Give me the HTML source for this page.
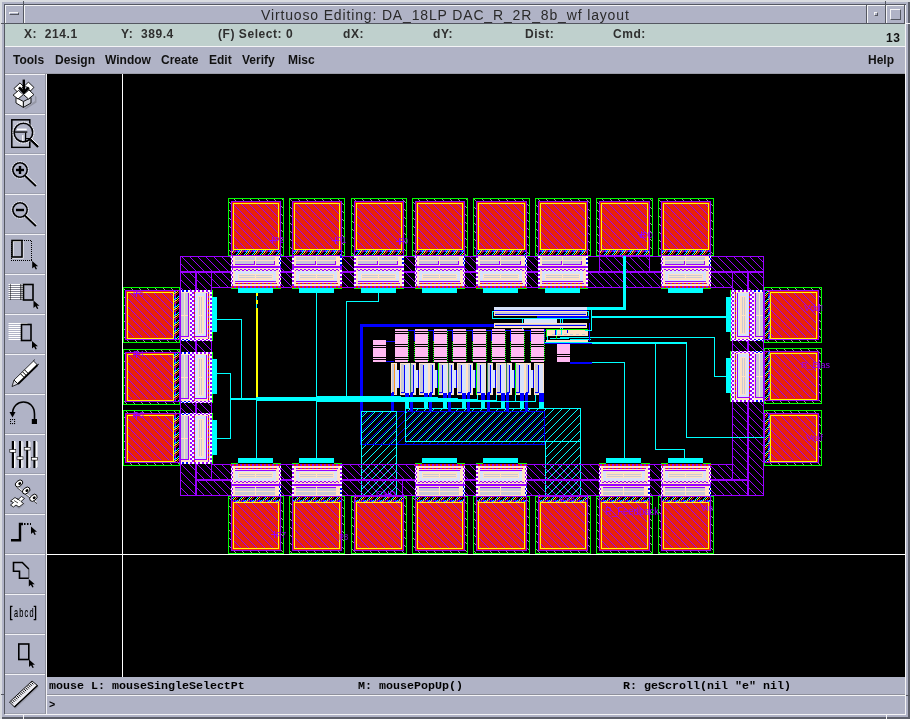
<!DOCTYPE html>
<html><head><meta charset="utf-8">
<style>
html,body{margin:0;padding:0;width:910px;height:719px;overflow:hidden;background:#d9dbe0;}
body{position:relative;font-family:"Liberation Sans",sans-serif;}
.a{position:absolute;}
.t{position:absolute;white-space:pre;line-height:1;will-change:transform;}
</style></head><body>
<!-- outer frame -->
<div class="a" style="left:2px;top:2px;width:908px;height:717px;background:#b0b3c6;"></div>
<div class="a" style="left:908px;top:2px;width:2px;height:717px;background:#5d606b;"></div>
<div class="a" style="left:2px;top:717px;width:908px;height:2px;background:#5d606b;"></div>
<div class="a" style="left:4px;top:4px;width:902px;height:1px;background:#545761;"></div>
<div class="a" style="left:4px;top:4px;width:1px;height:710px;background:#545761;"></div>
<div class="a" style="left:5px;top:714px;width:901px;height:1px;background:#f4f4f6;"></div>
<div class="a" style="left:905px;top:5px;width:1px;height:710px;background:#f4f4f6;"></div>

<div class="a" style="left:1px;top:23px;width:4px;height:1px;background:#545761;"></div>
<div class="a" style="left:906px;top:23px;width:4px;height:1px;background:#f4f4f6;"></div>
<div class="a" style="left:1px;top:694px;width:4px;height:1px;background:#545761;"></div>
<div class="a" style="left:906px;top:695px;width:4px;height:1px;background:#545761;"></div>
<div class="a" style="left:23px;top:714px;width:1px;height:5px;background:#f4f4f6;"></div>
<div class="a" style="left:886px;top:714px;width:1px;height:5px;background:#f4f4f6;"></div>
<!-- title bar -->
<div class="a" style="left:5px;top:5px;width:900px;height:18px;background:#b0b3c6;"></div>
<div class="a" style="left:5px;top:5px;width:900px;height:1px;background:#f4f4f6;"></div>
<div class="a" style="left:5px;top:23px;width:900px;height:1px;background:#545761;"></div>
<div class="a" style="left:5px;top:5px;width:1px;height:18px;background:#f4f4f6;"></div>
<div class="a" style="left:23px;top:1px;width:1px;height:23px;background:#545761;"></div>
<div class="a" style="left:24px;top:5px;width:1px;height:18px;background:#f4f4f6;"></div>
<div class="a" style="left:866px;top:5px;width:1px;height:18px;background:#545761;"></div>
<div class="a" style="left:867px;top:5px;width:1px;height:18px;background:#f4f4f6;"></div>
<div class="a" style="left:885px;top:1px;width:1px;height:23px;background:#545761;"></div>
<div class="a" style="left:886px;top:5px;width:1px;height:18px;background:#f4f4f6;"></div>
<div class="a" style="left:904px;top:5px;width:1px;height:18px;background:#545761;"></div>
<!-- minimize icon (left) -->
<div class="a" style="left:9px;top:12px;width:10px;height:3px;border-top:1px solid #f4f4f6;border-left:1px solid #f4f4f6;border-bottom:1px solid #545761;border-right:1px solid #545761;box-sizing:border-box;"></div>
<!-- iconify -->
<div class="a" style="left:874px;top:12px;width:4px;height:4px;border-top:1px solid #f4f4f6;border-left:1px solid #f4f4f6;border-bottom:1px solid #545761;border-right:1px solid #545761;box-sizing:border-box;"></div>
<!-- maximize -->
<div class="a" style="left:890px;top:9px;width:11px;height:11px;border-top:1px solid #f4f4f6;border-left:1px solid #f4f4f6;border-bottom:1px solid #545761;border-right:1px solid #545761;box-sizing:border-box;"></div>
<div class="t" id="title" style="left:261px;top:8px;font-size:14px;color:#2a2a2a;letter-spacing:0.85px;">Virtuoso Editing: DA_18LP DAC_R_2R_8b_wf layout</div>

<!-- status bar -->
<div class="a" style="left:5px;top:24px;width:900px;height:22px;background:#bfd0cd;"></div>
<div class="a" style="left:5px;top:46px;width:900px;height:1px;background:#f4f4f6;"></div>
<div class="t sb" style="left:24.2px;top:28px;">X:  214.1</div>
<div class="t sb" style="left:120.5px;top:28px;">Y:  389.4</div>
<div class="t sb" style="left:217.6px;top:28px;">(F) Select: 0</div>
<div class="t sb" style="left:343px;top:28px;">dX:</div>
<div class="t sb" style="left:433px;top:28px;">dY:</div>
<div class="t sb" style="left:525px;top:28px;">Dist:</div>
<div class="t sb" style="left:613px;top:28px;">Cmd:</div>
<div class="t sb" style="left:886px;top:32px;color:#111;">13</div>
<style>.sb{font-size:12px;font-weight:bold;color:#2f2f2f;letter-spacing:0.55px;}.mn{font-size:12px;font-weight:bold;color:#111;top:54px;}</style>

<!-- menu bar -->
<div class="t mn" style="left:13px;">Tools</div>
<div class="t mn" style="left:55px;">Design</div>
<div class="t mn" style="left:105px;">Window</div>
<div class="t mn" style="left:161px;">Create</div>
<div class="t mn" style="left:209px;">Edit</div>
<div class="t mn" style="left:242px;">Verify</div>
<div class="t mn" style="left:288px;">Misc</div>
<div class="t mn" style="left:868px;">Help</div>

<!-- canvas -->
<div class="a" style="left:5px;top:73px;width:900px;height:1px;background:#9c9eab;"></div>
<div class="a" id="canvas" style="left:47px;top:74px;width:858px;height:603px;background:#000;"></div>

<svg class="a" style="left:0;top:0;" width="910" height="719" viewBox="0 0 910 719" shape-rendering="crispEdges">
<clipPath id="cclip"><rect x="47" y="74" width="858" height="603"/></clipPath>
<g clip-path="url(#cclip)">
<defs><pattern id="hp" patternUnits="userSpaceOnUse" x="0" y="0" width="8" height="8"><rect x="0" y="3" width="1" height="1" fill="#9a00ff"/><rect x="1" y="4" width="1" height="1" fill="#9a00ff"/><rect x="2" y="5" width="1" height="1" fill="#9a00ff"/><rect x="3" y="6" width="1" height="1" fill="#9a00ff"/><rect x="4" y="7" width="1" height="1" fill="#9a00ff"/><rect x="5" y="0" width="1" height="1" fill="#9a00ff"/><rect x="6" y="1" width="1" height="1" fill="#9a00ff"/><rect x="7" y="2" width="1" height="1" fill="#9a00ff"/></pattern><pattern id="hred" patternUnits="userSpaceOnUse" x="0" y="0" width="8" height="8"><rect width="8" height="8" fill="#e8200c"/><rect x="0" y="3" width="1" height="1" fill="#9a00ff"/><rect x="1" y="4" width="1" height="1" fill="#9a00ff"/><rect x="2" y="5" width="1" height="1" fill="#9a00ff"/><rect x="3" y="6" width="1" height="1" fill="#9a00ff"/><rect x="4" y="7" width="1" height="1" fill="#9a00ff"/><rect x="5" y="0" width="1" height="1" fill="#9a00ff"/><rect x="6" y="1" width="1" height="1" fill="#9a00ff"/><rect x="7" y="2" width="1" height="1" fill="#9a00ff"/></pattern><pattern id="hc" patternUnits="userSpaceOnUse" x="0" y="0" width="8" height="8"><rect x="0" y="2" width="1" height="1" fill="#00ffff"/><rect x="1" y="1" width="1" height="1" fill="#00ffff"/><rect x="2" y="0" width="1" height="1" fill="#00ffff"/><rect x="3" y="7" width="1" height="1" fill="#00ffff"/><rect x="4" y="6" width="1" height="1" fill="#00ffff"/><rect x="5" y="5" width="1" height="1" fill="#00ffff"/><rect x="6" y="4" width="1" height="1" fill="#00ffff"/><rect x="7" y="3" width="1" height="1" fill="#00ffff"/></pattern><pattern id="hb" patternUnits="userSpaceOnUse" x="0" y="0" width="8" height="8"><rect x="0" y="0" width="1" height="1" fill="#0000ff"/><rect x="1" y="7" width="1" height="1" fill="#0000ff"/><rect x="2" y="6" width="1" height="1" fill="#0000ff"/><rect x="3" y="5" width="1" height="1" fill="#0000ff"/><rect x="4" y="4" width="1" height="1" fill="#0000ff"/><rect x="5" y="3" width="1" height="1" fill="#0000ff"/><rect x="6" y="2" width="1" height="1" fill="#0000ff"/><rect x="7" y="1" width="1" height="1" fill="#0000ff"/></pattern><pattern id="hg" patternUnits="userSpaceOnUse" x="0" y="0" width="8" height="8"><rect x="0" y="5" width="1" height="1" fill="#9a9a9a"/><rect x="1" y="6" width="1" height="1" fill="#9a9a9a"/><rect x="2" y="7" width="1" height="1" fill="#9a9a9a"/><rect x="3" y="0" width="1" height="1" fill="#9a9a9a"/><rect x="4" y="1" width="1" height="1" fill="#9a9a9a"/><rect x="5" y="2" width="1" height="1" fill="#9a9a9a"/><rect x="6" y="3" width="1" height="1" fill="#9a9a9a"/><rect x="7" y="4" width="1" height="1" fill="#9a9a9a"/></pattern><pattern id="mix" patternUnits="userSpaceOnUse" x="0" y="0" width="8" height="8"><rect width="8" height="8" fill="#000"/><rect x="0" y="2" width="1" height="1" fill="#00ffff"/><rect x="0" y="4" width="1" height="1" fill="#ffff00"/><rect x="0" y="6" width="1" height="1" fill="#e8200c"/><rect x="1" y="1" width="1" height="1" fill="#00ffff"/><rect x="1" y="3" width="1" height="1" fill="#ffff00"/><rect x="1" y="5" width="1" height="1" fill="#e8200c"/><rect x="2" y="0" width="1" height="1" fill="#00ffff"/><rect x="2" y="2" width="1" height="1" fill="#ffff00"/><rect x="2" y="4" width="1" height="1" fill="#e8200c"/><rect x="3" y="1" width="1" height="1" fill="#ffff00"/><rect x="3" y="3" width="1" height="1" fill="#e8200c"/><rect x="3" y="7" width="1" height="1" fill="#00ffff"/><rect x="4" y="0" width="1" height="1" fill="#ffff00"/><rect x="4" y="2" width="1" height="1" fill="#e8200c"/><rect x="4" y="6" width="1" height="1" fill="#00ffff"/><rect x="5" y="1" width="1" height="1" fill="#e8200c"/><rect x="5" y="5" width="1" height="1" fill="#00ffff"/><rect x="5" y="7" width="1" height="1" fill="#ffff00"/><rect x="6" y="0" width="1" height="1" fill="#e8200c"/><rect x="6" y="4" width="1" height="1" fill="#00ffff"/><rect x="6" y="6" width="1" height="1" fill="#ffff00"/><rect x="7" y="3" width="1" height="1" fill="#00ffff"/><rect x="7" y="5" width="1" height="1" fill="#ffff00"/><rect x="7" y="7" width="1" height="1" fill="#e8200c"/></pattern><pattern id="drow" patternUnits="userSpaceOnUse" x="0" y="0" width="8" height="8"><rect x="0" y="0" width="1" height="1" fill="#0000ff"/><rect x="0" y="1" width="1" height="1" fill="#00ffff"/><rect x="0" y="2" width="1" height="1" fill="#0000ff"/><rect x="0" y="3" width="1" height="1" fill="#ffff00"/><rect x="0" y="4" width="1" height="1" fill="#0000ff"/><rect x="0" y="5" width="1" height="1" fill="#e8200c"/><rect x="0" y="6" width="1" height="1" fill="#0000ff"/><rect x="0" y="7" width="1" height="1" fill="#0000ff"/><rect x="1" y="0" width="1" height="1" fill="#00ffff"/><rect x="1" y="1" width="1" height="1" fill="#9a00ff"/><rect x="1" y="2" width="1" height="1" fill="#ffff00"/><rect x="1" y="3" width="1" height="1" fill="#9a00ff"/><rect x="1" y="4" width="1" height="1" fill="#e8200c"/><rect x="1" y="5" width="1" height="1" fill="#9a00ff"/><rect x="1" y="6" width="1" height="1" fill="#9a00ff"/><rect x="1" y="7" width="1" height="1" fill="#9a00ff"/><rect x="2" y="0" width="1" height="1" fill="#0000ff"/><rect x="2" y="1" width="1" height="1" fill="#ffff00"/><rect x="2" y="2" width="1" height="1" fill="#0000ff"/><rect x="2" y="3" width="1" height="1" fill="#e8200c"/><rect x="2" y="4" width="1" height="1" fill="#0000ff"/><rect x="2" y="5" width="1" height="1" fill="#0000ff"/><rect x="2" y="6" width="1" height="1" fill="#0000ff"/><rect x="2" y="7" width="1" height="1" fill="#00ffff"/><rect x="3" y="0" width="1" height="1" fill="#ffff00"/><rect x="3" y="1" width="1" height="1" fill="#9a00ff"/><rect x="3" y="2" width="1" height="1" fill="#e8200c"/><rect x="3" y="3" width="1" height="1" fill="#9a00ff"/><rect x="3" y="4" width="1" height="1" fill="#9a00ff"/><rect x="3" y="5" width="1" height="1" fill="#9a00ff"/><rect x="3" y="6" width="1" height="1" fill="#00ffff"/><rect x="3" y="7" width="1" height="1" fill="#9a00ff"/><rect x="4" y="0" width="1" height="1" fill="#0000ff"/><rect x="4" y="1" width="1" height="1" fill="#e8200c"/><rect x="4" y="2" width="1" height="1" fill="#0000ff"/><rect x="4" y="3" width="1" height="1" fill="#0000ff"/><rect x="4" y="4" width="1" height="1" fill="#0000ff"/><rect x="4" y="5" width="1" height="1" fill="#00ffff"/><rect x="4" y="6" width="1" height="1" fill="#0000ff"/><rect x="4" y="7" width="1" height="1" fill="#ffff00"/><rect x="5" y="0" width="1" height="1" fill="#e8200c"/><rect x="5" y="1" width="1" height="1" fill="#9a00ff"/><rect x="5" y="2" width="1" height="1" fill="#9a00ff"/><rect x="5" y="3" width="1" height="1" fill="#9a00ff"/><rect x="5" y="4" width="1" height="1" fill="#00ffff"/><rect x="5" y="5" width="1" height="1" fill="#9a00ff"/><rect x="5" y="6" width="1" height="1" fill="#ffff00"/><rect x="5" y="7" width="1" height="1" fill="#9a00ff"/><rect x="6" y="0" width="1" height="1" fill="#0000ff"/><rect x="6" y="1" width="1" height="1" fill="#0000ff"/><rect x="6" y="2" width="1" height="1" fill="#0000ff"/><rect x="6" y="3" width="1" height="1" fill="#00ffff"/><rect x="6" y="4" width="1" height="1" fill="#0000ff"/><rect x="6" y="5" width="1" height="1" fill="#ffff00"/><rect x="6" y="6" width="1" height="1" fill="#0000ff"/><rect x="6" y="7" width="1" height="1" fill="#e8200c"/><rect x="7" y="0" width="1" height="1" fill="#9a00ff"/><rect x="7" y="1" width="1" height="1" fill="#9a00ff"/><rect x="7" y="2" width="1" height="1" fill="#00ffff"/><rect x="7" y="3" width="1" height="1" fill="#9a00ff"/><rect x="7" y="4" width="1" height="1" fill="#ffff00"/><rect x="7" y="5" width="1" height="1" fill="#9a00ff"/><rect x="7" y="6" width="1" height="1" fill="#e8200c"/><rect x="7" y="7" width="1" height="1" fill="#9a00ff"/></pattern><pattern id="dPW" patternUnits="userSpaceOnUse" x="0" y="0" width="4" height="4"><rect x="0" y="0" width="1" height="1" fill="#9a00ff"/><rect x="0" y="1" width="1" height="1" fill="#9a00ff"/><rect x="0" y="2" width="1" height="1" fill="#ffffff"/><rect x="0" y="3" width="1" height="1" fill="#ffffff"/><rect x="1" y="0" width="1" height="1" fill="#9a00ff"/><rect x="1" y="1" width="1" height="1" fill="#9a00ff"/><rect x="1" y="2" width="1" height="1" fill="#ffffff"/><rect x="1" y="3" width="1" height="1" fill="#ffffff"/><rect x="2" y="0" width="1" height="1" fill="#ffffff"/><rect x="2" y="1" width="1" height="1" fill="#ffffff"/><rect x="2" y="2" width="1" height="1" fill="#9a00ff"/><rect x="2" y="3" width="1" height="1" fill="#9a00ff"/><rect x="3" y="0" width="1" height="1" fill="#ffffff"/><rect x="3" y="1" width="1" height="1" fill="#ffffff"/><rect x="3" y="2" width="1" height="1" fill="#9a00ff"/><rect x="3" y="3" width="1" height="1" fill="#9a00ff"/></pattern><pattern id="dPR" patternUnits="userSpaceOnUse" x="0" y="0" width="4" height="4"><rect x="0" y="0" width="1" height="1" fill="#9a00ff"/><rect x="0" y="1" width="1" height="1" fill="#9a00ff"/><rect x="0" y="2" width="1" height="1" fill="#e8200c"/><rect x="0" y="3" width="1" height="1" fill="#e8200c"/><rect x="1" y="0" width="1" height="1" fill="#9a00ff"/><rect x="1" y="1" width="1" height="1" fill="#9a00ff"/><rect x="1" y="2" width="1" height="1" fill="#e8200c"/><rect x="1" y="3" width="1" height="1" fill="#e8200c"/><rect x="2" y="0" width="1" height="1" fill="#e8200c"/><rect x="2" y="1" width="1" height="1" fill="#e8200c"/><rect x="2" y="2" width="1" height="1" fill="#9a00ff"/><rect x="2" y="3" width="1" height="1" fill="#9a00ff"/><rect x="3" y="0" width="1" height="1" fill="#e8200c"/><rect x="3" y="1" width="1" height="1" fill="#e8200c"/><rect x="3" y="2" width="1" height="1" fill="#9a00ff"/><rect x="3" y="3" width="1" height="1" fill="#9a00ff"/></pattern><pattern id="dPC" patternUnits="userSpaceOnUse" x="0" y="0" width="4" height="4"><rect x="0" y="0" width="1" height="1" fill="#9a00ff"/><rect x="0" y="1" width="1" height="1" fill="#9a00ff"/><rect x="0" y="2" width="1" height="1" fill="#ffe2c2"/><rect x="0" y="3" width="1" height="1" fill="#ffe2c2"/><rect x="1" y="0" width="1" height="1" fill="#9a00ff"/><rect x="1" y="1" width="1" height="1" fill="#9a00ff"/><rect x="1" y="2" width="1" height="1" fill="#ffe2c2"/><rect x="1" y="3" width="1" height="1" fill="#ffe2c2"/><rect x="2" y="0" width="1" height="1" fill="#ffe2c2"/><rect x="2" y="1" width="1" height="1" fill="#ffe2c2"/><rect x="2" y="2" width="1" height="1" fill="#9a00ff"/><rect x="2" y="3" width="1" height="1" fill="#9a00ff"/><rect x="3" y="0" width="1" height="1" fill="#ffe2c2"/><rect x="3" y="1" width="1" height="1" fill="#ffe2c2"/><rect x="3" y="2" width="1" height="1" fill="#9a00ff"/><rect x="3" y="3" width="1" height="1" fill="#9a00ff"/></pattern><pattern id="dPB" patternUnits="userSpaceOnUse" x="0" y="0" width="4" height="4"><rect x="0" y="0" width="1" height="1" fill="#9a00ff"/><rect x="0" y="1" width="1" height="1" fill="#9a00ff"/><rect x="0" y="2" width="1" height="1" fill="#0000ff"/><rect x="0" y="3" width="1" height="1" fill="#0000ff"/><rect x="1" y="0" width="1" height="1" fill="#9a00ff"/><rect x="1" y="1" width="1" height="1" fill="#9a00ff"/><rect x="1" y="2" width="1" height="1" fill="#0000ff"/><rect x="1" y="3" width="1" height="1" fill="#0000ff"/><rect x="2" y="0" width="1" height="1" fill="#0000ff"/><rect x="2" y="1" width="1" height="1" fill="#0000ff"/><rect x="2" y="2" width="1" height="1" fill="#9a00ff"/><rect x="2" y="3" width="1" height="1" fill="#9a00ff"/><rect x="3" y="0" width="1" height="1" fill="#0000ff"/><rect x="3" y="1" width="1" height="1" fill="#0000ff"/><rect x="3" y="2" width="1" height="1" fill="#9a00ff"/><rect x="3" y="3" width="1" height="1" fill="#9a00ff"/></pattern><pattern id="dGr" patternUnits="userSpaceOnUse" x="0" y="0" width="2" height="2"><rect x="0" y="0" width="1" height="1" fill="#00ff00"/><rect x="1" y="1" width="1" height="1" fill="#00ff00"/></pattern><pattern id="dBW" patternUnits="userSpaceOnUse" x="0" y="0" width="4" height="4"><rect x="0" y="0" width="1" height="1" fill="#0000ff"/><rect x="0" y="1" width="1" height="1" fill="#0000ff"/><rect x="0" y="2" width="1" height="1" fill="#ffffff"/><rect x="0" y="3" width="1" height="1" fill="#ffffff"/><rect x="1" y="0" width="1" height="1" fill="#0000ff"/><rect x="1" y="1" width="1" height="1" fill="#0000ff"/><rect x="1" y="2" width="1" height="1" fill="#ffffff"/><rect x="1" y="3" width="1" height="1" fill="#ffffff"/><rect x="2" y="0" width="1" height="1" fill="#ffffff"/><rect x="2" y="1" width="1" height="1" fill="#ffffff"/><rect x="2" y="2" width="1" height="1" fill="#0000ff"/><rect x="2" y="3" width="1" height="1" fill="#0000ff"/><rect x="3" y="0" width="1" height="1" fill="#ffffff"/><rect x="3" y="1" width="1" height="1" fill="#ffffff"/><rect x="3" y="2" width="1" height="1" fill="#0000ff"/><rect x="3" y="3" width="1" height="1" fill="#0000ff"/></pattern><pattern id="dash" patternUnits="userSpaceOnUse" x="0" y="0" width="6" height="1"><rect x="0" y="0" width="1" height="1" fill="#c8c8d8"/><rect x="1" y="0" width="1" height="1" fill="#c8c8d8"/><rect x="2" y="0" width="1" height="1" fill="#c8c8d8"/></pattern></defs>
<rect x="180" y="256" width="584" height="240" fill="url(#hp)"/>
<rect x="212" y="288" width="520" height="176" fill="#000"/>
<rect x="180" y="256" width="584" height="1" fill="#9a00ff"/>
<rect x="180" y="495" width="584" height="1" fill="#9a00ff"/>
<rect x="180" y="256" width="1" height="240" fill="#9a00ff"/>
<rect x="763" y="256" width="1" height="240" fill="#9a00ff"/>
<rect x="211" y="287" width="522" height="1" fill="#9a00ff"/>
<rect x="211" y="464" width="522" height="1" fill="#9a00ff"/>
<rect x="211" y="287" width="1" height="178" fill="#9a00ff"/>
<rect x="732" y="287" width="1" height="178" fill="#9a00ff"/>
<rect x="180" y="271" width="584" height="2" fill="#9a00ff"/>
<rect x="195" y="479" width="554" height="2" fill="#9a00ff"/>
<rect x="195" y="271" width="2" height="225" fill="#9a00ff"/>
<rect x="747" y="271" width="2" height="225" fill="#9a00ff"/>
<rect x="211" y="271" width="1" height="17" fill="#9a00ff"/>
<rect x="732" y="271" width="1" height="17" fill="#9a00ff"/>
<rect x="211" y="464" width="1" height="16" fill="#9a00ff"/>
<rect x="732" y="464" width="1" height="16" fill="#9a00ff"/>
<rect x="228" y="198" width="56" height="58" fill="url(#hg)"/>
<rect x="228" y="198" width="56" height="1" fill="#00ff00"/>
<rect x="228" y="255" width="56" height="1" fill="#00ff00"/>
<rect x="228" y="198" width="1" height="58" fill="#00ff00"/>
<rect x="283" y="198" width="1" height="58" fill="#00ff00"/>
<rect x="231" y="201" width="50" height="1" fill="#9a00ff"/>
<rect x="231" y="255" width="50" height="1" fill="#9a00ff"/>
<rect x="231" y="201" width="1" height="55" fill="#9a00ff"/>
<rect x="280" y="201" width="1" height="55" fill="#9a00ff"/>
<rect x="232" y="202" width="48" height="48" fill="#e8200c"/>
<rect x="234" y="204" width="44" height="45" fill="url(#hred)"/>
<rect x="233" y="203" width="46" height="1" fill="#ffff00"/>
<rect x="233" y="249" width="46" height="1" fill="#ffff00"/>
<rect x="233" y="203" width="1" height="47" fill="#ffff00"/>
<rect x="278" y="203" width="1" height="47" fill="#ffff00"/>
<rect x="232" y="250" width="48" height="2" fill="url(#drow)"/>
<rect x="232" y="252" width="48" height="3" fill="url(#mix)"/>
<rect x="228" y="496" width="56" height="58" fill="url(#hg)"/>
<rect x="228" y="496" width="56" height="1" fill="#00ff00"/>
<rect x="228" y="553" width="56" height="1" fill="#00ff00"/>
<rect x="228" y="496" width="1" height="58" fill="#00ff00"/>
<rect x="283" y="496" width="1" height="58" fill="#00ff00"/>
<rect x="231" y="496" width="50" height="1" fill="#9a00ff"/>
<rect x="231" y="550" width="50" height="1" fill="#9a00ff"/>
<rect x="231" y="496" width="1" height="55" fill="#9a00ff"/>
<rect x="280" y="496" width="1" height="55" fill="#9a00ff"/>
<rect x="232" y="501" width="48" height="49" fill="#e8200c"/>
<rect x="234" y="503" width="44" height="45" fill="url(#hred)"/>
<rect x="233" y="502" width="46" height="1" fill="#ffff00"/>
<rect x="233" y="548" width="46" height="1" fill="#ffff00"/>
<rect x="233" y="502" width="1" height="47" fill="#ffff00"/>
<rect x="278" y="502" width="1" height="47" fill="#ffff00"/>
<rect x="232" y="497" width="48" height="3" fill="url(#mix)"/>
<rect x="232" y="500" width="48" height="2" fill="url(#drow)"/>
<rect x="289" y="198" width="56" height="58" fill="url(#hg)"/>
<rect x="289" y="198" width="56" height="1" fill="#00ff00"/>
<rect x="289" y="255" width="56" height="1" fill="#00ff00"/>
<rect x="289" y="198" width="1" height="58" fill="#00ff00"/>
<rect x="344" y="198" width="1" height="58" fill="#00ff00"/>
<rect x="292" y="201" width="50" height="1" fill="#9a00ff"/>
<rect x="292" y="255" width="50" height="1" fill="#9a00ff"/>
<rect x="292" y="201" width="1" height="55" fill="#9a00ff"/>
<rect x="341" y="201" width="1" height="55" fill="#9a00ff"/>
<rect x="293" y="202" width="48" height="48" fill="#e8200c"/>
<rect x="295" y="204" width="44" height="45" fill="url(#hred)"/>
<rect x="294" y="203" width="46" height="1" fill="#ffff00"/>
<rect x="294" y="249" width="46" height="1" fill="#ffff00"/>
<rect x="294" y="203" width="1" height="47" fill="#ffff00"/>
<rect x="339" y="203" width="1" height="47" fill="#ffff00"/>
<rect x="293" y="250" width="48" height="2" fill="url(#drow)"/>
<rect x="293" y="252" width="48" height="3" fill="url(#mix)"/>
<rect x="289" y="496" width="56" height="58" fill="url(#hg)"/>
<rect x="289" y="496" width="56" height="1" fill="#00ff00"/>
<rect x="289" y="553" width="56" height="1" fill="#00ff00"/>
<rect x="289" y="496" width="1" height="58" fill="#00ff00"/>
<rect x="344" y="496" width="1" height="58" fill="#00ff00"/>
<rect x="292" y="496" width="50" height="1" fill="#9a00ff"/>
<rect x="292" y="550" width="50" height="1" fill="#9a00ff"/>
<rect x="292" y="496" width="1" height="55" fill="#9a00ff"/>
<rect x="341" y="496" width="1" height="55" fill="#9a00ff"/>
<rect x="293" y="501" width="48" height="49" fill="#e8200c"/>
<rect x="295" y="503" width="44" height="45" fill="url(#hred)"/>
<rect x="294" y="502" width="46" height="1" fill="#ffff00"/>
<rect x="294" y="548" width="46" height="1" fill="#ffff00"/>
<rect x="294" y="502" width="1" height="47" fill="#ffff00"/>
<rect x="339" y="502" width="1" height="47" fill="#ffff00"/>
<rect x="293" y="497" width="48" height="3" fill="url(#mix)"/>
<rect x="293" y="500" width="48" height="2" fill="url(#drow)"/>
<rect x="351" y="198" width="56" height="58" fill="url(#hg)"/>
<rect x="351" y="198" width="56" height="1" fill="#00ff00"/>
<rect x="351" y="255" width="56" height="1" fill="#00ff00"/>
<rect x="351" y="198" width="1" height="58" fill="#00ff00"/>
<rect x="406" y="198" width="1" height="58" fill="#00ff00"/>
<rect x="354" y="201" width="50" height="1" fill="#9a00ff"/>
<rect x="354" y="255" width="50" height="1" fill="#9a00ff"/>
<rect x="354" y="201" width="1" height="55" fill="#9a00ff"/>
<rect x="403" y="201" width="1" height="55" fill="#9a00ff"/>
<rect x="355" y="202" width="48" height="48" fill="#e8200c"/>
<rect x="357" y="204" width="44" height="45" fill="url(#hred)"/>
<rect x="356" y="203" width="46" height="1" fill="#ffff00"/>
<rect x="356" y="249" width="46" height="1" fill="#ffff00"/>
<rect x="356" y="203" width="1" height="47" fill="#ffff00"/>
<rect x="401" y="203" width="1" height="47" fill="#ffff00"/>
<rect x="355" y="250" width="48" height="2" fill="url(#drow)"/>
<rect x="355" y="252" width="48" height="3" fill="url(#mix)"/>
<rect x="351" y="496" width="56" height="58" fill="url(#hg)"/>
<rect x="351" y="496" width="56" height="1" fill="#00ff00"/>
<rect x="351" y="553" width="56" height="1" fill="#00ff00"/>
<rect x="351" y="496" width="1" height="58" fill="#00ff00"/>
<rect x="406" y="496" width="1" height="58" fill="#00ff00"/>
<rect x="354" y="496" width="50" height="1" fill="#9a00ff"/>
<rect x="354" y="550" width="50" height="1" fill="#9a00ff"/>
<rect x="354" y="496" width="1" height="55" fill="#9a00ff"/>
<rect x="403" y="496" width="1" height="55" fill="#9a00ff"/>
<rect x="355" y="501" width="48" height="49" fill="#e8200c"/>
<rect x="357" y="503" width="44" height="45" fill="url(#hred)"/>
<rect x="356" y="502" width="46" height="1" fill="#ffff00"/>
<rect x="356" y="548" width="46" height="1" fill="#ffff00"/>
<rect x="356" y="502" width="1" height="47" fill="#ffff00"/>
<rect x="401" y="502" width="1" height="47" fill="#ffff00"/>
<rect x="355" y="497" width="48" height="3" fill="url(#mix)"/>
<rect x="355" y="500" width="48" height="2" fill="url(#drow)"/>
<rect x="412" y="198" width="56" height="58" fill="url(#hg)"/>
<rect x="412" y="198" width="56" height="1" fill="#00ff00"/>
<rect x="412" y="255" width="56" height="1" fill="#00ff00"/>
<rect x="412" y="198" width="1" height="58" fill="#00ff00"/>
<rect x="467" y="198" width="1" height="58" fill="#00ff00"/>
<rect x="415" y="201" width="50" height="1" fill="#9a00ff"/>
<rect x="415" y="255" width="50" height="1" fill="#9a00ff"/>
<rect x="415" y="201" width="1" height="55" fill="#9a00ff"/>
<rect x="464" y="201" width="1" height="55" fill="#9a00ff"/>
<rect x="416" y="202" width="48" height="48" fill="#e8200c"/>
<rect x="418" y="204" width="44" height="45" fill="url(#hred)"/>
<rect x="417" y="203" width="46" height="1" fill="#ffff00"/>
<rect x="417" y="249" width="46" height="1" fill="#ffff00"/>
<rect x="417" y="203" width="1" height="47" fill="#ffff00"/>
<rect x="462" y="203" width="1" height="47" fill="#ffff00"/>
<rect x="416" y="250" width="48" height="2" fill="url(#drow)"/>
<rect x="416" y="252" width="48" height="3" fill="url(#mix)"/>
<rect x="412" y="496" width="56" height="58" fill="url(#hg)"/>
<rect x="412" y="496" width="56" height="1" fill="#00ff00"/>
<rect x="412" y="553" width="56" height="1" fill="#00ff00"/>
<rect x="412" y="496" width="1" height="58" fill="#00ff00"/>
<rect x="467" y="496" width="1" height="58" fill="#00ff00"/>
<rect x="415" y="496" width="50" height="1" fill="#9a00ff"/>
<rect x="415" y="550" width="50" height="1" fill="#9a00ff"/>
<rect x="415" y="496" width="1" height="55" fill="#9a00ff"/>
<rect x="464" y="496" width="1" height="55" fill="#9a00ff"/>
<rect x="416" y="501" width="48" height="49" fill="#e8200c"/>
<rect x="418" y="503" width="44" height="45" fill="url(#hred)"/>
<rect x="417" y="502" width="46" height="1" fill="#ffff00"/>
<rect x="417" y="548" width="46" height="1" fill="#ffff00"/>
<rect x="417" y="502" width="1" height="47" fill="#ffff00"/>
<rect x="462" y="502" width="1" height="47" fill="#ffff00"/>
<rect x="416" y="497" width="48" height="3" fill="url(#mix)"/>
<rect x="416" y="500" width="48" height="2" fill="url(#drow)"/>
<rect x="473" y="198" width="57" height="58" fill="url(#hg)"/>
<rect x="473" y="198" width="57" height="1" fill="#00ff00"/>
<rect x="473" y="255" width="57" height="1" fill="#00ff00"/>
<rect x="473" y="198" width="1" height="58" fill="#00ff00"/>
<rect x="529" y="198" width="1" height="58" fill="#00ff00"/>
<rect x="476" y="201" width="51" height="1" fill="#9a00ff"/>
<rect x="476" y="255" width="51" height="1" fill="#9a00ff"/>
<rect x="476" y="201" width="1" height="55" fill="#9a00ff"/>
<rect x="526" y="201" width="1" height="55" fill="#9a00ff"/>
<rect x="477" y="202" width="49" height="48" fill="#e8200c"/>
<rect x="479" y="204" width="45" height="45" fill="url(#hred)"/>
<rect x="478" y="203" width="47" height="1" fill="#ffff00"/>
<rect x="478" y="249" width="47" height="1" fill="#ffff00"/>
<rect x="478" y="203" width="1" height="47" fill="#ffff00"/>
<rect x="524" y="203" width="1" height="47" fill="#ffff00"/>
<rect x="477" y="250" width="49" height="2" fill="url(#drow)"/>
<rect x="477" y="252" width="49" height="3" fill="url(#mix)"/>
<rect x="473" y="496" width="57" height="58" fill="url(#hg)"/>
<rect x="473" y="496" width="57" height="1" fill="#00ff00"/>
<rect x="473" y="553" width="57" height="1" fill="#00ff00"/>
<rect x="473" y="496" width="1" height="58" fill="#00ff00"/>
<rect x="529" y="496" width="1" height="58" fill="#00ff00"/>
<rect x="476" y="496" width="51" height="1" fill="#9a00ff"/>
<rect x="476" y="550" width="51" height="1" fill="#9a00ff"/>
<rect x="476" y="496" width="1" height="55" fill="#9a00ff"/>
<rect x="526" y="496" width="1" height="55" fill="#9a00ff"/>
<rect x="477" y="501" width="49" height="49" fill="#e8200c"/>
<rect x="479" y="503" width="45" height="45" fill="url(#hred)"/>
<rect x="478" y="502" width="47" height="1" fill="#ffff00"/>
<rect x="478" y="548" width="47" height="1" fill="#ffff00"/>
<rect x="478" y="502" width="1" height="47" fill="#ffff00"/>
<rect x="524" y="502" width="1" height="47" fill="#ffff00"/>
<rect x="477" y="497" width="49" height="3" fill="url(#mix)"/>
<rect x="477" y="500" width="49" height="2" fill="url(#drow)"/>
<rect x="535" y="198" width="56" height="58" fill="url(#hg)"/>
<rect x="535" y="198" width="56" height="1" fill="#00ff00"/>
<rect x="535" y="255" width="56" height="1" fill="#00ff00"/>
<rect x="535" y="198" width="1" height="58" fill="#00ff00"/>
<rect x="590" y="198" width="1" height="58" fill="#00ff00"/>
<rect x="538" y="201" width="50" height="1" fill="#9a00ff"/>
<rect x="538" y="255" width="50" height="1" fill="#9a00ff"/>
<rect x="538" y="201" width="1" height="55" fill="#9a00ff"/>
<rect x="587" y="201" width="1" height="55" fill="#9a00ff"/>
<rect x="539" y="202" width="48" height="48" fill="#e8200c"/>
<rect x="541" y="204" width="44" height="45" fill="url(#hred)"/>
<rect x="540" y="203" width="46" height="1" fill="#ffff00"/>
<rect x="540" y="249" width="46" height="1" fill="#ffff00"/>
<rect x="540" y="203" width="1" height="47" fill="#ffff00"/>
<rect x="585" y="203" width="1" height="47" fill="#ffff00"/>
<rect x="539" y="250" width="48" height="2" fill="url(#drow)"/>
<rect x="539" y="252" width="48" height="3" fill="url(#mix)"/>
<rect x="535" y="496" width="56" height="58" fill="url(#hg)"/>
<rect x="535" y="496" width="56" height="1" fill="#00ff00"/>
<rect x="535" y="553" width="56" height="1" fill="#00ff00"/>
<rect x="535" y="496" width="1" height="58" fill="#00ff00"/>
<rect x="590" y="496" width="1" height="58" fill="#00ff00"/>
<rect x="538" y="496" width="50" height="1" fill="#9a00ff"/>
<rect x="538" y="550" width="50" height="1" fill="#9a00ff"/>
<rect x="538" y="496" width="1" height="55" fill="#9a00ff"/>
<rect x="587" y="496" width="1" height="55" fill="#9a00ff"/>
<rect x="539" y="501" width="48" height="49" fill="#e8200c"/>
<rect x="541" y="503" width="44" height="45" fill="url(#hred)"/>
<rect x="540" y="502" width="46" height="1" fill="#ffff00"/>
<rect x="540" y="548" width="46" height="1" fill="#ffff00"/>
<rect x="540" y="502" width="1" height="47" fill="#ffff00"/>
<rect x="585" y="502" width="1" height="47" fill="#ffff00"/>
<rect x="539" y="497" width="48" height="3" fill="url(#mix)"/>
<rect x="539" y="500" width="48" height="2" fill="url(#drow)"/>
<rect x="596" y="198" width="57" height="58" fill="url(#hg)"/>
<rect x="596" y="198" width="57" height="1" fill="#00ff00"/>
<rect x="596" y="255" width="57" height="1" fill="#00ff00"/>
<rect x="596" y="198" width="1" height="58" fill="#00ff00"/>
<rect x="652" y="198" width="1" height="58" fill="#00ff00"/>
<rect x="599" y="201" width="51" height="1" fill="#9a00ff"/>
<rect x="599" y="255" width="51" height="1" fill="#9a00ff"/>
<rect x="599" y="201" width="1" height="55" fill="#9a00ff"/>
<rect x="649" y="201" width="1" height="55" fill="#9a00ff"/>
<rect x="600" y="202" width="49" height="48" fill="#e8200c"/>
<rect x="602" y="204" width="45" height="45" fill="url(#hred)"/>
<rect x="601" y="203" width="47" height="1" fill="#ffff00"/>
<rect x="601" y="249" width="47" height="1" fill="#ffff00"/>
<rect x="601" y="203" width="1" height="47" fill="#ffff00"/>
<rect x="647" y="203" width="1" height="47" fill="#ffff00"/>
<rect x="600" y="250" width="49" height="2" fill="url(#drow)"/>
<rect x="600" y="252" width="49" height="3" fill="url(#mix)"/>
<rect x="596" y="496" width="57" height="58" fill="url(#hg)"/>
<rect x="596" y="496" width="57" height="1" fill="#00ff00"/>
<rect x="596" y="553" width="57" height="1" fill="#00ff00"/>
<rect x="596" y="496" width="1" height="58" fill="#00ff00"/>
<rect x="652" y="496" width="1" height="58" fill="#00ff00"/>
<rect x="599" y="496" width="51" height="1" fill="#9a00ff"/>
<rect x="599" y="550" width="51" height="1" fill="#9a00ff"/>
<rect x="599" y="496" width="1" height="55" fill="#9a00ff"/>
<rect x="649" y="496" width="1" height="55" fill="#9a00ff"/>
<rect x="600" y="501" width="49" height="49" fill="#e8200c"/>
<rect x="602" y="503" width="45" height="45" fill="url(#hred)"/>
<rect x="601" y="502" width="47" height="1" fill="#ffff00"/>
<rect x="601" y="548" width="47" height="1" fill="#ffff00"/>
<rect x="601" y="502" width="1" height="47" fill="#ffff00"/>
<rect x="647" y="502" width="1" height="47" fill="#ffff00"/>
<rect x="600" y="497" width="49" height="3" fill="url(#mix)"/>
<rect x="600" y="500" width="49" height="2" fill="url(#drow)"/>
<rect x="658" y="198" width="56" height="58" fill="url(#hg)"/>
<rect x="658" y="198" width="56" height="1" fill="#00ff00"/>
<rect x="658" y="255" width="56" height="1" fill="#00ff00"/>
<rect x="658" y="198" width="1" height="58" fill="#00ff00"/>
<rect x="713" y="198" width="1" height="58" fill="#00ff00"/>
<rect x="661" y="201" width="50" height="1" fill="#9a00ff"/>
<rect x="661" y="255" width="50" height="1" fill="#9a00ff"/>
<rect x="661" y="201" width="1" height="55" fill="#9a00ff"/>
<rect x="710" y="201" width="1" height="55" fill="#9a00ff"/>
<rect x="662" y="202" width="48" height="48" fill="#e8200c"/>
<rect x="664" y="204" width="44" height="45" fill="url(#hred)"/>
<rect x="663" y="203" width="46" height="1" fill="#ffff00"/>
<rect x="663" y="249" width="46" height="1" fill="#ffff00"/>
<rect x="663" y="203" width="1" height="47" fill="#ffff00"/>
<rect x="708" y="203" width="1" height="47" fill="#ffff00"/>
<rect x="662" y="250" width="48" height="2" fill="url(#drow)"/>
<rect x="662" y="252" width="48" height="3" fill="url(#mix)"/>
<rect x="658" y="496" width="56" height="58" fill="url(#hg)"/>
<rect x="658" y="496" width="56" height="1" fill="#00ff00"/>
<rect x="658" y="553" width="56" height="1" fill="#00ff00"/>
<rect x="658" y="496" width="1" height="58" fill="#00ff00"/>
<rect x="713" y="496" width="1" height="58" fill="#00ff00"/>
<rect x="661" y="496" width="50" height="1" fill="#9a00ff"/>
<rect x="661" y="550" width="50" height="1" fill="#9a00ff"/>
<rect x="661" y="496" width="1" height="55" fill="#9a00ff"/>
<rect x="710" y="496" width="1" height="55" fill="#9a00ff"/>
<rect x="662" y="501" width="48" height="49" fill="#e8200c"/>
<rect x="664" y="503" width="44" height="45" fill="url(#hred)"/>
<rect x="663" y="502" width="46" height="1" fill="#ffff00"/>
<rect x="663" y="548" width="46" height="1" fill="#ffff00"/>
<rect x="663" y="502" width="1" height="47" fill="#ffff00"/>
<rect x="708" y="502" width="1" height="47" fill="#ffff00"/>
<rect x="662" y="497" width="48" height="3" fill="url(#mix)"/>
<rect x="662" y="500" width="48" height="2" fill="url(#drow)"/>
<rect x="123" y="287" width="57" height="56" fill="url(#hg)"/>
<rect x="123" y="287" width="57" height="1" fill="#00ff00"/>
<rect x="123" y="342" width="57" height="1" fill="#00ff00"/>
<rect x="123" y="287" width="1" height="56" fill="#00ff00"/>
<rect x="179" y="287" width="1" height="56" fill="#00ff00"/>
<rect x="125" y="290" width="55" height="1" fill="#9a00ff"/>
<rect x="125" y="339" width="55" height="1" fill="#9a00ff"/>
<rect x="125" y="290" width="1" height="50" fill="#9a00ff"/>
<rect x="179" y="290" width="1" height="50" fill="#9a00ff"/>
<rect x="126" y="291" width="48" height="48" fill="#e8200c"/>
<rect x="128" y="293" width="45" height="44" fill="url(#hred)"/>
<rect x="127" y="292" width="47" height="1" fill="#ffff00"/>
<rect x="127" y="338" width="47" height="1" fill="#ffff00"/>
<rect x="127" y="292" width="1" height="47" fill="#ffff00"/>
<rect x="173" y="292" width="1" height="47" fill="#ffff00"/>
<rect x="174" y="291" width="2" height="48" fill="url(#drow)"/>
<rect x="176" y="291" width="3" height="48" fill="url(#mix)"/>
<rect x="764" y="287" width="58" height="56" fill="url(#hg)"/>
<rect x="764" y="287" width="58" height="1" fill="#00ff00"/>
<rect x="764" y="342" width="58" height="1" fill="#00ff00"/>
<rect x="764" y="287" width="1" height="56" fill="#00ff00"/>
<rect x="821" y="287" width="1" height="56" fill="#00ff00"/>
<rect x="764" y="290" width="55" height="1" fill="#9a00ff"/>
<rect x="764" y="339" width="55" height="1" fill="#9a00ff"/>
<rect x="764" y="290" width="1" height="50" fill="#9a00ff"/>
<rect x="818" y="290" width="1" height="50" fill="#9a00ff"/>
<rect x="770" y="291" width="48" height="48" fill="#e8200c"/>
<rect x="771" y="293" width="45" height="44" fill="url(#hred)"/>
<rect x="770" y="292" width="47" height="1" fill="#ffff00"/>
<rect x="770" y="338" width="47" height="1" fill="#ffff00"/>
<rect x="770" y="292" width="1" height="47" fill="#ffff00"/>
<rect x="816" y="292" width="1" height="47" fill="#ffff00"/>
<rect x="768" y="291" width="2" height="48" fill="url(#drow)"/>
<rect x="765" y="291" width="3" height="48" fill="url(#mix)"/>
<rect x="123" y="349" width="57" height="56" fill="url(#hg)"/>
<rect x="123" y="349" width="57" height="1" fill="#00ff00"/>
<rect x="123" y="404" width="57" height="1" fill="#00ff00"/>
<rect x="123" y="349" width="1" height="56" fill="#00ff00"/>
<rect x="179" y="349" width="1" height="56" fill="#00ff00"/>
<rect x="125" y="352" width="55" height="1" fill="#9a00ff"/>
<rect x="125" y="401" width="55" height="1" fill="#9a00ff"/>
<rect x="125" y="352" width="1" height="50" fill="#9a00ff"/>
<rect x="179" y="352" width="1" height="50" fill="#9a00ff"/>
<rect x="126" y="353" width="48" height="48" fill="#e8200c"/>
<rect x="128" y="355" width="45" height="44" fill="url(#hred)"/>
<rect x="127" y="354" width="47" height="1" fill="#ffff00"/>
<rect x="127" y="400" width="47" height="1" fill="#ffff00"/>
<rect x="127" y="354" width="1" height="47" fill="#ffff00"/>
<rect x="173" y="354" width="1" height="47" fill="#ffff00"/>
<rect x="174" y="353" width="2" height="48" fill="url(#drow)"/>
<rect x="176" y="353" width="3" height="48" fill="url(#mix)"/>
<rect x="764" y="348" width="58" height="56" fill="url(#hg)"/>
<rect x="764" y="348" width="58" height="1" fill="#00ff00"/>
<rect x="764" y="403" width="58" height="1" fill="#00ff00"/>
<rect x="764" y="348" width="1" height="56" fill="#00ff00"/>
<rect x="821" y="348" width="1" height="56" fill="#00ff00"/>
<rect x="764" y="351" width="55" height="1" fill="#9a00ff"/>
<rect x="764" y="400" width="55" height="1" fill="#9a00ff"/>
<rect x="764" y="351" width="1" height="50" fill="#9a00ff"/>
<rect x="818" y="351" width="1" height="50" fill="#9a00ff"/>
<rect x="770" y="352" width="48" height="48" fill="#e8200c"/>
<rect x="771" y="354" width="45" height="44" fill="url(#hred)"/>
<rect x="770" y="353" width="47" height="1" fill="#ffff00"/>
<rect x="770" y="399" width="47" height="1" fill="#ffff00"/>
<rect x="770" y="353" width="1" height="47" fill="#ffff00"/>
<rect x="816" y="353" width="1" height="47" fill="#ffff00"/>
<rect x="768" y="352" width="2" height="48" fill="url(#drow)"/>
<rect x="765" y="352" width="3" height="48" fill="url(#mix)"/>
<rect x="123" y="410" width="57" height="56" fill="url(#hg)"/>
<rect x="123" y="410" width="57" height="1" fill="#00ff00"/>
<rect x="123" y="465" width="57" height="1" fill="#00ff00"/>
<rect x="123" y="410" width="1" height="56" fill="#00ff00"/>
<rect x="179" y="410" width="1" height="56" fill="#00ff00"/>
<rect x="125" y="413" width="55" height="1" fill="#9a00ff"/>
<rect x="125" y="462" width="55" height="1" fill="#9a00ff"/>
<rect x="125" y="413" width="1" height="50" fill="#9a00ff"/>
<rect x="179" y="413" width="1" height="50" fill="#9a00ff"/>
<rect x="126" y="414" width="48" height="48" fill="#e8200c"/>
<rect x="128" y="416" width="45" height="44" fill="url(#hred)"/>
<rect x="127" y="415" width="47" height="1" fill="#ffff00"/>
<rect x="127" y="461" width="47" height="1" fill="#ffff00"/>
<rect x="127" y="415" width="1" height="47" fill="#ffff00"/>
<rect x="173" y="415" width="1" height="47" fill="#ffff00"/>
<rect x="174" y="414" width="2" height="48" fill="url(#drow)"/>
<rect x="176" y="414" width="3" height="48" fill="url(#mix)"/>
<rect x="764" y="410" width="58" height="56" fill="url(#hg)"/>
<rect x="764" y="410" width="58" height="1" fill="#00ff00"/>
<rect x="764" y="465" width="58" height="1" fill="#00ff00"/>
<rect x="764" y="410" width="1" height="56" fill="#00ff00"/>
<rect x="821" y="410" width="1" height="56" fill="#00ff00"/>
<rect x="764" y="413" width="55" height="1" fill="#9a00ff"/>
<rect x="764" y="462" width="55" height="1" fill="#9a00ff"/>
<rect x="764" y="413" width="1" height="50" fill="#9a00ff"/>
<rect x="818" y="413" width="1" height="50" fill="#9a00ff"/>
<rect x="770" y="414" width="48" height="48" fill="#e8200c"/>
<rect x="771" y="416" width="45" height="44" fill="url(#hred)"/>
<rect x="770" y="415" width="47" height="1" fill="#ffff00"/>
<rect x="770" y="461" width="47" height="1" fill="#ffff00"/>
<rect x="770" y="415" width="1" height="47" fill="#ffff00"/>
<rect x="816" y="415" width="1" height="47" fill="#ffff00"/>
<rect x="768" y="414" width="2" height="48" fill="url(#drow)"/>
<rect x="765" y="414" width="3" height="48" fill="url(#mix)"/>
<rect x="231" y="256" width="50" height="12" fill="#ffe2c2"/>
<rect x="231" y="256" width="2" height="12" fill="url(#dPW)"/>
<rect x="279" y="256" width="2" height="12" fill="url(#dBW)"/>
<rect x="235" y="257" width="20" height="3" fill="#c8c8d8"/>
<rect x="235" y="261" width="20" height="3" fill="#c8c8d8"/>
<rect x="235" y="264" width="20" height="1" fill="#9a00ff"/>
<rect x="254" y="261" width="1" height="4" fill="#9a00ff"/>
<rect x="256" y="257" width="19" height="3" fill="#c8c8d8"/>
<rect x="256" y="261" width="19" height="3" fill="#c8c8d8"/>
<rect x="256" y="264" width="19" height="1" fill="#9a00ff"/>
<rect x="274" y="261" width="1" height="4" fill="#9a00ff"/>
<rect x="231" y="266" width="50" height="2" fill="#9a00ff"/>
<rect x="231" y="268" width="50" height="20" fill="#ffe2c2"/>
<rect x="231" y="268" width="2" height="20" fill="url(#dPW)"/>
<rect x="279" y="268" width="2" height="20" fill="url(#dPW)"/>
<rect x="234" y="269" width="44" height="2" fill="url(#dPC)"/>
<rect x="235" y="271" width="41" height="10" fill="#d8e2fa"/>
<rect x="238" y="274" width="35" height="6" fill="#ffe2c2"/>
<rect x="239" y="275" width="16" height="1" fill="#c8c8d8"/>
<rect x="239" y="277" width="16" height="1" fill="#c8c8d8"/>
<rect x="256" y="275" width="16" height="1" fill="#c8c8d8"/>
<rect x="256" y="277" width="16" height="1" fill="#c8c8d8"/>
<rect x="235" y="281" width="41" height="1" fill="#9a00ff"/>
<rect x="235" y="283" width="42" height="1" fill="url(#dPR)"/>
<rect x="231" y="286" width="50" height="2" fill="url(#dPR)"/>
<rect x="238" y="288" width="35" height="5" fill="#00ffff"/>
<rect x="231" y="288" width="7" height="1" fill="#00ff00"/>
<rect x="273" y="288" width="8" height="1" fill="#00ff00"/>
<rect x="231" y="484" width="50" height="12" fill="#ffe2c2"/>
<rect x="231" y="484" width="2" height="12" fill="url(#dPW)"/>
<rect x="279" y="484" width="2" height="12" fill="url(#dBW)"/>
<rect x="231" y="484" width="50" height="2" fill="#9a00ff"/>
<rect x="235" y="487" width="20" height="1" fill="#9a00ff"/>
<rect x="254" y="487" width="1" height="4" fill="#9a00ff"/>
<rect x="235" y="488" width="20" height="3" fill="#c8c8d8"/>
<rect x="235" y="492" width="20" height="3" fill="#c8c8d8"/>
<rect x="256" y="487" width="19" height="1" fill="#9a00ff"/>
<rect x="274" y="487" width="1" height="4" fill="#9a00ff"/>
<rect x="256" y="488" width="19" height="3" fill="#c8c8d8"/>
<rect x="256" y="492" width="19" height="3" fill="#c8c8d8"/>
<rect x="231" y="464" width="50" height="20" fill="#ffe2c2"/>
<rect x="231" y="464" width="2" height="20" fill="url(#dPW)"/>
<rect x="279" y="464" width="2" height="20" fill="url(#dPW)"/>
<rect x="231" y="464" width="50" height="2" fill="url(#dPR)"/>
<rect x="235" y="468" width="42" height="1" fill="url(#dPR)"/>
<rect x="235" y="470" width="41" height="1" fill="#9a00ff"/>
<rect x="235" y="471" width="41" height="10" fill="#d8e2fa"/>
<rect x="238" y="472" width="35" height="6" fill="#ffe2c2"/>
<rect x="239" y="474" width="16" height="1" fill="#c8c8d8"/>
<rect x="239" y="476" width="16" height="1" fill="#c8c8d8"/>
<rect x="256" y="474" width="16" height="1" fill="#c8c8d8"/>
<rect x="256" y="476" width="16" height="1" fill="#c8c8d8"/>
<rect x="234" y="481" width="44" height="2" fill="url(#dPC)"/>
<rect x="238" y="458" width="35" height="5" fill="#00ffff"/>
<rect x="231" y="463" width="7" height="1" fill="#00ff00"/>
<rect x="273" y="463" width="8" height="1" fill="#00ff00"/>
<rect x="292" y="256" width="50" height="12" fill="#ffe2c2"/>
<rect x="292" y="256" width="2" height="12" fill="url(#dPW)"/>
<rect x="340" y="256" width="2" height="12" fill="url(#dBW)"/>
<rect x="296" y="257" width="20" height="3" fill="#c8c8d8"/>
<rect x="296" y="261" width="20" height="3" fill="#c8c8d8"/>
<rect x="296" y="264" width="20" height="1" fill="#9a00ff"/>
<rect x="315" y="261" width="1" height="4" fill="#9a00ff"/>
<rect x="317" y="257" width="19" height="3" fill="#c8c8d8"/>
<rect x="317" y="261" width="19" height="3" fill="#c8c8d8"/>
<rect x="317" y="264" width="19" height="1" fill="#9a00ff"/>
<rect x="335" y="261" width="1" height="4" fill="#9a00ff"/>
<rect x="292" y="266" width="50" height="2" fill="#9a00ff"/>
<rect x="292" y="268" width="50" height="20" fill="#ffe2c2"/>
<rect x="292" y="268" width="2" height="20" fill="url(#dPW)"/>
<rect x="340" y="268" width="2" height="20" fill="url(#dPW)"/>
<rect x="295" y="269" width="44" height="2" fill="url(#dPC)"/>
<rect x="296" y="271" width="41" height="10" fill="#d8e2fa"/>
<rect x="299" y="274" width="35" height="6" fill="#ffe2c2"/>
<rect x="300" y="275" width="16" height="1" fill="#c8c8d8"/>
<rect x="300" y="277" width="16" height="1" fill="#c8c8d8"/>
<rect x="317" y="275" width="16" height="1" fill="#c8c8d8"/>
<rect x="317" y="277" width="16" height="1" fill="#c8c8d8"/>
<rect x="296" y="281" width="41" height="1" fill="#9a00ff"/>
<rect x="296" y="283" width="42" height="1" fill="url(#dPR)"/>
<rect x="292" y="286" width="50" height="2" fill="url(#dPR)"/>
<rect x="299" y="288" width="35" height="5" fill="#00ffff"/>
<rect x="292" y="288" width="7" height="1" fill="#00ff00"/>
<rect x="334" y="288" width="8" height="1" fill="#00ff00"/>
<rect x="292" y="484" width="50" height="12" fill="#ffe2c2"/>
<rect x="292" y="484" width="2" height="12" fill="url(#dPW)"/>
<rect x="340" y="484" width="2" height="12" fill="url(#dBW)"/>
<rect x="292" y="484" width="50" height="2" fill="#9a00ff"/>
<rect x="296" y="487" width="20" height="1" fill="#9a00ff"/>
<rect x="315" y="487" width="1" height="4" fill="#9a00ff"/>
<rect x="296" y="488" width="20" height="3" fill="#c8c8d8"/>
<rect x="296" y="492" width="20" height="3" fill="#c8c8d8"/>
<rect x="317" y="487" width="19" height="1" fill="#9a00ff"/>
<rect x="335" y="487" width="1" height="4" fill="#9a00ff"/>
<rect x="317" y="488" width="19" height="3" fill="#c8c8d8"/>
<rect x="317" y="492" width="19" height="3" fill="#c8c8d8"/>
<rect x="292" y="464" width="50" height="20" fill="#ffe2c2"/>
<rect x="292" y="464" width="2" height="20" fill="url(#dPW)"/>
<rect x="340" y="464" width="2" height="20" fill="url(#dPW)"/>
<rect x="292" y="464" width="50" height="2" fill="url(#dPR)"/>
<rect x="296" y="468" width="42" height="1" fill="url(#dPR)"/>
<rect x="296" y="470" width="41" height="1" fill="#9a00ff"/>
<rect x="296" y="471" width="41" height="10" fill="#d8e2fa"/>
<rect x="299" y="472" width="35" height="6" fill="#ffe2c2"/>
<rect x="300" y="474" width="16" height="1" fill="#c8c8d8"/>
<rect x="300" y="476" width="16" height="1" fill="#c8c8d8"/>
<rect x="317" y="474" width="16" height="1" fill="#c8c8d8"/>
<rect x="317" y="476" width="16" height="1" fill="#c8c8d8"/>
<rect x="295" y="481" width="44" height="2" fill="url(#dPC)"/>
<rect x="299" y="458" width="35" height="5" fill="#00ffff"/>
<rect x="292" y="463" width="7" height="1" fill="#00ff00"/>
<rect x="334" y="463" width="8" height="1" fill="#00ff00"/>
<rect x="354" y="256" width="50" height="12" fill="#ffe2c2"/>
<rect x="354" y="256" width="2" height="12" fill="url(#dPW)"/>
<rect x="402" y="256" width="2" height="12" fill="url(#dBW)"/>
<rect x="358" y="257" width="20" height="3" fill="#c8c8d8"/>
<rect x="358" y="261" width="20" height="3" fill="#c8c8d8"/>
<rect x="358" y="264" width="20" height="1" fill="#9a00ff"/>
<rect x="377" y="261" width="1" height="4" fill="#9a00ff"/>
<rect x="379" y="257" width="19" height="3" fill="#c8c8d8"/>
<rect x="379" y="261" width="19" height="3" fill="#c8c8d8"/>
<rect x="379" y="264" width="19" height="1" fill="#9a00ff"/>
<rect x="397" y="261" width="1" height="4" fill="#9a00ff"/>
<rect x="354" y="266" width="50" height="2" fill="#9a00ff"/>
<rect x="354" y="268" width="50" height="20" fill="#ffe2c2"/>
<rect x="354" y="268" width="2" height="20" fill="url(#dPW)"/>
<rect x="402" y="268" width="2" height="20" fill="url(#dPW)"/>
<rect x="357" y="269" width="44" height="2" fill="url(#dPC)"/>
<rect x="358" y="271" width="41" height="10" fill="#d8e2fa"/>
<rect x="361" y="274" width="35" height="6" fill="#ffe2c2"/>
<rect x="362" y="275" width="16" height="1" fill="#c8c8d8"/>
<rect x="362" y="277" width="16" height="1" fill="#c8c8d8"/>
<rect x="379" y="275" width="16" height="1" fill="#c8c8d8"/>
<rect x="379" y="277" width="16" height="1" fill="#c8c8d8"/>
<rect x="358" y="281" width="41" height="1" fill="#9a00ff"/>
<rect x="358" y="283" width="42" height="1" fill="url(#dPR)"/>
<rect x="354" y="286" width="50" height="2" fill="url(#dPR)"/>
<rect x="361" y="288" width="35" height="5" fill="#00ffff"/>
<rect x="354" y="288" width="7" height="1" fill="#00ff00"/>
<rect x="396" y="288" width="8" height="1" fill="#00ff00"/>
<rect x="415" y="256" width="50" height="12" fill="#ffe2c2"/>
<rect x="415" y="256" width="2" height="12" fill="url(#dPW)"/>
<rect x="463" y="256" width="2" height="12" fill="url(#dBW)"/>
<rect x="419" y="257" width="20" height="3" fill="#c8c8d8"/>
<rect x="419" y="261" width="20" height="3" fill="#c8c8d8"/>
<rect x="419" y="264" width="20" height="1" fill="#9a00ff"/>
<rect x="438" y="261" width="1" height="4" fill="#9a00ff"/>
<rect x="440" y="257" width="19" height="3" fill="#c8c8d8"/>
<rect x="440" y="261" width="19" height="3" fill="#c8c8d8"/>
<rect x="440" y="264" width="19" height="1" fill="#9a00ff"/>
<rect x="458" y="261" width="1" height="4" fill="#9a00ff"/>
<rect x="415" y="266" width="50" height="2" fill="#9a00ff"/>
<rect x="415" y="268" width="50" height="20" fill="#ffe2c2"/>
<rect x="415" y="268" width="2" height="20" fill="url(#dPW)"/>
<rect x="463" y="268" width="2" height="20" fill="url(#dPW)"/>
<rect x="418" y="269" width="44" height="2" fill="url(#dPC)"/>
<rect x="419" y="271" width="41" height="10" fill="#d8e2fa"/>
<rect x="422" y="274" width="35" height="6" fill="#ffe2c2"/>
<rect x="423" y="275" width="16" height="1" fill="#c8c8d8"/>
<rect x="423" y="277" width="16" height="1" fill="#c8c8d8"/>
<rect x="440" y="275" width="16" height="1" fill="#c8c8d8"/>
<rect x="440" y="277" width="16" height="1" fill="#c8c8d8"/>
<rect x="419" y="281" width="41" height="1" fill="#9a00ff"/>
<rect x="419" y="283" width="42" height="1" fill="url(#dPR)"/>
<rect x="415" y="286" width="50" height="2" fill="url(#dPR)"/>
<rect x="422" y="288" width="35" height="5" fill="#00ffff"/>
<rect x="415" y="288" width="7" height="1" fill="#00ff00"/>
<rect x="457" y="288" width="8" height="1" fill="#00ff00"/>
<rect x="415" y="484" width="50" height="12" fill="#ffe2c2"/>
<rect x="415" y="484" width="2" height="12" fill="url(#dPW)"/>
<rect x="463" y="484" width="2" height="12" fill="url(#dBW)"/>
<rect x="415" y="484" width="50" height="2" fill="#9a00ff"/>
<rect x="419" y="487" width="20" height="1" fill="#9a00ff"/>
<rect x="438" y="487" width="1" height="4" fill="#9a00ff"/>
<rect x="419" y="488" width="20" height="3" fill="#c8c8d8"/>
<rect x="419" y="492" width="20" height="3" fill="#c8c8d8"/>
<rect x="440" y="487" width="19" height="1" fill="#9a00ff"/>
<rect x="458" y="487" width="1" height="4" fill="#9a00ff"/>
<rect x="440" y="488" width="19" height="3" fill="#c8c8d8"/>
<rect x="440" y="492" width="19" height="3" fill="#c8c8d8"/>
<rect x="415" y="464" width="50" height="20" fill="#ffe2c2"/>
<rect x="415" y="464" width="2" height="20" fill="url(#dPW)"/>
<rect x="463" y="464" width="2" height="20" fill="url(#dPW)"/>
<rect x="415" y="464" width="50" height="2" fill="url(#dPR)"/>
<rect x="419" y="468" width="42" height="1" fill="url(#dPR)"/>
<rect x="419" y="470" width="41" height="1" fill="#9a00ff"/>
<rect x="419" y="471" width="41" height="10" fill="#d8e2fa"/>
<rect x="422" y="472" width="35" height="6" fill="#ffe2c2"/>
<rect x="423" y="474" width="16" height="1" fill="#c8c8d8"/>
<rect x="423" y="476" width="16" height="1" fill="#c8c8d8"/>
<rect x="440" y="474" width="16" height="1" fill="#c8c8d8"/>
<rect x="440" y="476" width="16" height="1" fill="#c8c8d8"/>
<rect x="418" y="481" width="44" height="2" fill="url(#dPC)"/>
<rect x="422" y="458" width="35" height="5" fill="#00ffff"/>
<rect x="415" y="463" width="7" height="1" fill="#00ff00"/>
<rect x="457" y="463" width="8" height="1" fill="#00ff00"/>
<rect x="476" y="256" width="51" height="12" fill="#ffe2c2"/>
<rect x="476" y="256" width="2" height="12" fill="url(#dPW)"/>
<rect x="525" y="256" width="2" height="12" fill="url(#dBW)"/>
<rect x="480" y="257" width="20" height="3" fill="#c8c8d8"/>
<rect x="480" y="261" width="20" height="3" fill="#c8c8d8"/>
<rect x="480" y="264" width="20" height="1" fill="#9a00ff"/>
<rect x="499" y="261" width="1" height="4" fill="#9a00ff"/>
<rect x="501" y="257" width="20" height="3" fill="#c8c8d8"/>
<rect x="501" y="261" width="20" height="3" fill="#c8c8d8"/>
<rect x="501" y="264" width="20" height="1" fill="#9a00ff"/>
<rect x="520" y="261" width="1" height="4" fill="#9a00ff"/>
<rect x="476" y="266" width="51" height="2" fill="#9a00ff"/>
<rect x="476" y="268" width="51" height="20" fill="#ffe2c2"/>
<rect x="476" y="268" width="2" height="20" fill="url(#dPW)"/>
<rect x="525" y="268" width="2" height="20" fill="url(#dPW)"/>
<rect x="479" y="269" width="45" height="2" fill="url(#dPC)"/>
<rect x="480" y="271" width="42" height="10" fill="#d8e2fa"/>
<rect x="483" y="274" width="36" height="6" fill="#ffe2c2"/>
<rect x="484" y="275" width="16" height="1" fill="#c8c8d8"/>
<rect x="484" y="277" width="16" height="1" fill="#c8c8d8"/>
<rect x="501" y="275" width="17" height="1" fill="#c8c8d8"/>
<rect x="501" y="277" width="17" height="1" fill="#c8c8d8"/>
<rect x="480" y="281" width="42" height="1" fill="#9a00ff"/>
<rect x="480" y="283" width="43" height="1" fill="url(#dPR)"/>
<rect x="476" y="286" width="51" height="2" fill="url(#dPR)"/>
<rect x="483" y="288" width="35" height="5" fill="#00ffff"/>
<rect x="476" y="288" width="7" height="1" fill="#00ff00"/>
<rect x="518" y="288" width="9" height="1" fill="#00ff00"/>
<rect x="476" y="484" width="51" height="12" fill="#ffe2c2"/>
<rect x="476" y="484" width="2" height="12" fill="url(#dPW)"/>
<rect x="525" y="484" width="2" height="12" fill="url(#dBW)"/>
<rect x="476" y="484" width="51" height="2" fill="#9a00ff"/>
<rect x="480" y="487" width="20" height="1" fill="#9a00ff"/>
<rect x="499" y="487" width="1" height="4" fill="#9a00ff"/>
<rect x="480" y="488" width="20" height="3" fill="#c8c8d8"/>
<rect x="480" y="492" width="20" height="3" fill="#c8c8d8"/>
<rect x="501" y="487" width="20" height="1" fill="#9a00ff"/>
<rect x="520" y="487" width="1" height="4" fill="#9a00ff"/>
<rect x="501" y="488" width="20" height="3" fill="#c8c8d8"/>
<rect x="501" y="492" width="20" height="3" fill="#c8c8d8"/>
<rect x="476" y="464" width="51" height="20" fill="#ffe2c2"/>
<rect x="476" y="464" width="2" height="20" fill="url(#dPW)"/>
<rect x="525" y="464" width="2" height="20" fill="url(#dPW)"/>
<rect x="476" y="464" width="51" height="2" fill="url(#dPR)"/>
<rect x="480" y="468" width="43" height="1" fill="url(#dPR)"/>
<rect x="480" y="470" width="42" height="1" fill="#9a00ff"/>
<rect x="480" y="471" width="42" height="10" fill="#d8e2fa"/>
<rect x="483" y="472" width="36" height="6" fill="#ffe2c2"/>
<rect x="484" y="474" width="16" height="1" fill="#c8c8d8"/>
<rect x="484" y="476" width="16" height="1" fill="#c8c8d8"/>
<rect x="501" y="474" width="17" height="1" fill="#c8c8d8"/>
<rect x="501" y="476" width="17" height="1" fill="#c8c8d8"/>
<rect x="479" y="481" width="45" height="2" fill="url(#dPC)"/>
<rect x="483" y="458" width="35" height="5" fill="#00ffff"/>
<rect x="476" y="463" width="7" height="1" fill="#00ff00"/>
<rect x="518" y="463" width="9" height="1" fill="#00ff00"/>
<rect x="538" y="256" width="50" height="12" fill="#ffe2c2"/>
<rect x="538" y="256" width="2" height="12" fill="url(#dPW)"/>
<rect x="586" y="256" width="2" height="12" fill="url(#dBW)"/>
<rect x="542" y="257" width="20" height="3" fill="#c8c8d8"/>
<rect x="542" y="261" width="20" height="3" fill="#c8c8d8"/>
<rect x="542" y="264" width="20" height="1" fill="#9a00ff"/>
<rect x="561" y="261" width="1" height="4" fill="#9a00ff"/>
<rect x="563" y="257" width="19" height="3" fill="#c8c8d8"/>
<rect x="563" y="261" width="19" height="3" fill="#c8c8d8"/>
<rect x="563" y="264" width="19" height="1" fill="#9a00ff"/>
<rect x="581" y="261" width="1" height="4" fill="#9a00ff"/>
<rect x="538" y="266" width="50" height="2" fill="#9a00ff"/>
<rect x="538" y="268" width="50" height="20" fill="#ffe2c2"/>
<rect x="538" y="268" width="2" height="20" fill="url(#dPW)"/>
<rect x="586" y="268" width="2" height="20" fill="url(#dPW)"/>
<rect x="541" y="269" width="44" height="2" fill="url(#dPC)"/>
<rect x="542" y="271" width="41" height="10" fill="#d8e2fa"/>
<rect x="545" y="274" width="35" height="6" fill="#ffe2c2"/>
<rect x="546" y="275" width="16" height="1" fill="#c8c8d8"/>
<rect x="546" y="277" width="16" height="1" fill="#c8c8d8"/>
<rect x="563" y="275" width="16" height="1" fill="#c8c8d8"/>
<rect x="563" y="277" width="16" height="1" fill="#c8c8d8"/>
<rect x="542" y="281" width="41" height="1" fill="#9a00ff"/>
<rect x="542" y="283" width="42" height="1" fill="url(#dPR)"/>
<rect x="538" y="286" width="50" height="2" fill="url(#dPR)"/>
<rect x="545" y="288" width="35" height="5" fill="#00ffff"/>
<rect x="538" y="288" width="7" height="1" fill="#00ff00"/>
<rect x="580" y="288" width="8" height="1" fill="#00ff00"/>
<rect x="599" y="484" width="51" height="12" fill="#ffe2c2"/>
<rect x="599" y="484" width="2" height="12" fill="url(#dPW)"/>
<rect x="648" y="484" width="2" height="12" fill="url(#dBW)"/>
<rect x="599" y="484" width="51" height="2" fill="#9a00ff"/>
<rect x="603" y="487" width="20" height="1" fill="#9a00ff"/>
<rect x="622" y="487" width="1" height="4" fill="#9a00ff"/>
<rect x="603" y="488" width="20" height="3" fill="#c8c8d8"/>
<rect x="603" y="492" width="20" height="3" fill="#c8c8d8"/>
<rect x="624" y="487" width="20" height="1" fill="#9a00ff"/>
<rect x="643" y="487" width="1" height="4" fill="#9a00ff"/>
<rect x="624" y="488" width="20" height="3" fill="#c8c8d8"/>
<rect x="624" y="492" width="20" height="3" fill="#c8c8d8"/>
<rect x="599" y="464" width="51" height="20" fill="#ffe2c2"/>
<rect x="599" y="464" width="2" height="20" fill="url(#dPW)"/>
<rect x="648" y="464" width="2" height="20" fill="url(#dPW)"/>
<rect x="599" y="464" width="51" height="2" fill="url(#dPR)"/>
<rect x="603" y="468" width="43" height="1" fill="url(#dPR)"/>
<rect x="603" y="470" width="42" height="1" fill="#9a00ff"/>
<rect x="603" y="471" width="42" height="10" fill="#d8e2fa"/>
<rect x="606" y="472" width="36" height="6" fill="#ffe2c2"/>
<rect x="607" y="474" width="16" height="1" fill="#c8c8d8"/>
<rect x="607" y="476" width="16" height="1" fill="#c8c8d8"/>
<rect x="624" y="474" width="17" height="1" fill="#c8c8d8"/>
<rect x="624" y="476" width="17" height="1" fill="#c8c8d8"/>
<rect x="602" y="481" width="45" height="2" fill="url(#dPC)"/>
<rect x="606" y="458" width="35" height="5" fill="#00ffff"/>
<rect x="599" y="463" width="7" height="1" fill="#00ff00"/>
<rect x="641" y="463" width="9" height="1" fill="#00ff00"/>
<rect x="661" y="256" width="50" height="12" fill="#ffe2c2"/>
<rect x="661" y="256" width="2" height="12" fill="url(#dPW)"/>
<rect x="709" y="256" width="2" height="12" fill="url(#dBW)"/>
<rect x="665" y="257" width="20" height="3" fill="#c8c8d8"/>
<rect x="665" y="261" width="20" height="3" fill="#c8c8d8"/>
<rect x="665" y="264" width="20" height="1" fill="#9a00ff"/>
<rect x="684" y="261" width="1" height="4" fill="#9a00ff"/>
<rect x="686" y="257" width="19" height="3" fill="#c8c8d8"/>
<rect x="686" y="261" width="19" height="3" fill="#c8c8d8"/>
<rect x="686" y="264" width="19" height="1" fill="#9a00ff"/>
<rect x="704" y="261" width="1" height="4" fill="#9a00ff"/>
<rect x="661" y="266" width="50" height="2" fill="#9a00ff"/>
<rect x="661" y="268" width="50" height="20" fill="#ffe2c2"/>
<rect x="661" y="268" width="2" height="20" fill="url(#dPW)"/>
<rect x="709" y="268" width="2" height="20" fill="url(#dPW)"/>
<rect x="664" y="269" width="44" height="2" fill="url(#dPC)"/>
<rect x="665" y="271" width="41" height="10" fill="#d8e2fa"/>
<rect x="668" y="274" width="35" height="6" fill="#ffe2c2"/>
<rect x="669" y="275" width="16" height="1" fill="#c8c8d8"/>
<rect x="669" y="277" width="16" height="1" fill="#c8c8d8"/>
<rect x="686" y="275" width="16" height="1" fill="#c8c8d8"/>
<rect x="686" y="277" width="16" height="1" fill="#c8c8d8"/>
<rect x="665" y="281" width="41" height="1" fill="#9a00ff"/>
<rect x="665" y="283" width="42" height="1" fill="url(#dPR)"/>
<rect x="661" y="286" width="50" height="2" fill="url(#dPR)"/>
<rect x="668" y="288" width="35" height="5" fill="#00ffff"/>
<rect x="661" y="288" width="7" height="1" fill="#00ff00"/>
<rect x="703" y="288" width="8" height="1" fill="#00ff00"/>
<rect x="661" y="484" width="50" height="12" fill="#ffe2c2"/>
<rect x="661" y="484" width="2" height="12" fill="url(#dPW)"/>
<rect x="709" y="484" width="2" height="12" fill="url(#dBW)"/>
<rect x="661" y="484" width="50" height="2" fill="#9a00ff"/>
<rect x="665" y="487" width="20" height="1" fill="#9a00ff"/>
<rect x="684" y="487" width="1" height="4" fill="#9a00ff"/>
<rect x="665" y="488" width="20" height="3" fill="#c8c8d8"/>
<rect x="665" y="492" width="20" height="3" fill="#c8c8d8"/>
<rect x="686" y="487" width="19" height="1" fill="#9a00ff"/>
<rect x="704" y="487" width="1" height="4" fill="#9a00ff"/>
<rect x="686" y="488" width="19" height="3" fill="#c8c8d8"/>
<rect x="686" y="492" width="19" height="3" fill="#c8c8d8"/>
<rect x="661" y="464" width="50" height="20" fill="#ffe2c2"/>
<rect x="661" y="464" width="2" height="20" fill="url(#dPW)"/>
<rect x="709" y="464" width="2" height="20" fill="url(#dPW)"/>
<rect x="661" y="464" width="50" height="2" fill="url(#dPR)"/>
<rect x="665" y="468" width="42" height="1" fill="url(#dPR)"/>
<rect x="665" y="470" width="41" height="1" fill="#9a00ff"/>
<rect x="665" y="471" width="41" height="10" fill="#d8e2fa"/>
<rect x="668" y="472" width="35" height="6" fill="#ffe2c2"/>
<rect x="669" y="474" width="16" height="1" fill="#c8c8d8"/>
<rect x="669" y="476" width="16" height="1" fill="#c8c8d8"/>
<rect x="686" y="474" width="16" height="1" fill="#c8c8d8"/>
<rect x="686" y="476" width="16" height="1" fill="#c8c8d8"/>
<rect x="664" y="481" width="44" height="2" fill="url(#dPC)"/>
<rect x="668" y="458" width="35" height="5" fill="#00ffff"/>
<rect x="661" y="463" width="7" height="1" fill="#00ff00"/>
<rect x="703" y="463" width="8" height="1" fill="#00ff00"/>
<rect x="588" y="257" width="11" height="14" fill="#000"/>
<rect x="650" y="257" width="10" height="14" fill="#000"/>
<rect x="599" y="256" width="51" height="1" fill="#9a00ff"/>
<rect x="599" y="271" width="51" height="1" fill="#9a00ff"/>
<rect x="599" y="256" width="1" height="16" fill="#9a00ff"/>
<rect x="649" y="256" width="1" height="16" fill="#9a00ff"/>
<rect x="180" y="290" width="12" height="51" fill="#ffe2c2"/>
<rect x="180" y="290" width="12" height="2" fill="url(#dBW)"/>
<rect x="180" y="339" width="12" height="2" fill="url(#dBW)"/>
<rect x="180" y="290" width="1" height="51" fill="#9a00ff"/>
<rect x="181" y="293" width="3" height="44" fill="#c8c8d8"/>
<rect x="185" y="293" width="3" height="44" fill="#c8c8d8"/>
<rect x="181" y="315" width="7" height="1" fill="#ffe2c2"/>
<rect x="188" y="293" width="1" height="44" fill="#9a00ff"/>
<rect x="181" y="336" width="8" height="1" fill="#9a00ff"/>
<rect x="190" y="290" width="2" height="51" fill="url(#dPW)"/>
<rect x="192" y="290" width="20" height="51" fill="#ffe2c2"/>
<rect x="192" y="290" width="2" height="51" fill="url(#dPW)"/>
<rect x="194" y="292" width="1" height="47" fill="url(#dPR)"/>
<rect x="195" y="293" width="11" height="44" fill="#d8e2fa"/>
<rect x="198" y="296" width="6" height="38" fill="#ffe2c2"/>
<rect x="199" y="297" width="1" height="36" fill="#c8c8d8"/>
<rect x="201" y="297" width="1" height="36" fill="#c8c8d8"/>
<rect x="198" y="315" width="6" height="1" fill="#ffe2c2"/>
<rect x="206" y="293" width="1" height="44" fill="#9a00ff"/>
<rect x="195" y="336" width="12" height="1" fill="#9a00ff"/>
<rect x="208" y="292" width="1" height="47" fill="url(#dPR)"/>
<rect x="210" y="290" width="2" height="51" fill="url(#dPW)"/>
<rect x="192" y="290" width="20" height="2" fill="url(#dPW)"/>
<rect x="192" y="339" width="20" height="2" fill="url(#dPW)"/>
<rect x="212" y="297" width="5" height="35" fill="#00ffff"/>
<rect x="212" y="290" width="1" height="7" fill="#00ff00"/>
<rect x="212" y="332" width="1" height="9" fill="#00ff00"/>
<rect x="180" y="352" width="12" height="51" fill="#ffe2c2"/>
<rect x="180" y="352" width="12" height="2" fill="url(#dBW)"/>
<rect x="180" y="401" width="12" height="2" fill="url(#dBW)"/>
<rect x="180" y="352" width="1" height="51" fill="#9a00ff"/>
<rect x="181" y="355" width="3" height="44" fill="#c8c8d8"/>
<rect x="185" y="355" width="3" height="44" fill="#c8c8d8"/>
<rect x="181" y="377" width="7" height="1" fill="#ffe2c2"/>
<rect x="188" y="355" width="1" height="44" fill="#9a00ff"/>
<rect x="181" y="398" width="8" height="1" fill="#9a00ff"/>
<rect x="190" y="352" width="2" height="51" fill="url(#dPW)"/>
<rect x="192" y="352" width="20" height="51" fill="#ffe2c2"/>
<rect x="192" y="352" width="2" height="51" fill="url(#dPW)"/>
<rect x="194" y="354" width="1" height="47" fill="url(#dPR)"/>
<rect x="195" y="355" width="11" height="44" fill="#d8e2fa"/>
<rect x="198" y="358" width="6" height="38" fill="#ffe2c2"/>
<rect x="199" y="359" width="1" height="36" fill="#c8c8d8"/>
<rect x="201" y="359" width="1" height="36" fill="#c8c8d8"/>
<rect x="198" y="377" width="6" height="1" fill="#ffe2c2"/>
<rect x="206" y="355" width="1" height="44" fill="#9a00ff"/>
<rect x="195" y="398" width="12" height="1" fill="#9a00ff"/>
<rect x="208" y="354" width="1" height="47" fill="url(#dPR)"/>
<rect x="210" y="352" width="2" height="51" fill="url(#dPW)"/>
<rect x="192" y="352" width="20" height="2" fill="url(#dPW)"/>
<rect x="192" y="401" width="20" height="2" fill="url(#dPW)"/>
<rect x="212" y="359" width="5" height="35" fill="#00ffff"/>
<rect x="212" y="352" width="1" height="7" fill="#00ff00"/>
<rect x="212" y="394" width="1" height="9" fill="#00ff00"/>
<rect x="180" y="413" width="12" height="51" fill="#ffe2c2"/>
<rect x="180" y="413" width="12" height="2" fill="url(#dBW)"/>
<rect x="180" y="462" width="12" height="2" fill="url(#dBW)"/>
<rect x="180" y="413" width="1" height="51" fill="#9a00ff"/>
<rect x="181" y="416" width="3" height="44" fill="#c8c8d8"/>
<rect x="185" y="416" width="3" height="44" fill="#c8c8d8"/>
<rect x="181" y="438" width="7" height="1" fill="#ffe2c2"/>
<rect x="188" y="416" width="1" height="44" fill="#9a00ff"/>
<rect x="181" y="459" width="8" height="1" fill="#9a00ff"/>
<rect x="190" y="413" width="2" height="51" fill="url(#dPW)"/>
<rect x="192" y="413" width="20" height="51" fill="#ffe2c2"/>
<rect x="192" y="413" width="2" height="51" fill="url(#dPW)"/>
<rect x="194" y="415" width="1" height="47" fill="url(#dPR)"/>
<rect x="195" y="416" width="11" height="44" fill="#d8e2fa"/>
<rect x="198" y="419" width="6" height="38" fill="#ffe2c2"/>
<rect x="199" y="420" width="1" height="36" fill="#c8c8d8"/>
<rect x="201" y="420" width="1" height="36" fill="#c8c8d8"/>
<rect x="198" y="438" width="6" height="1" fill="#ffe2c2"/>
<rect x="206" y="416" width="1" height="44" fill="#9a00ff"/>
<rect x="195" y="459" width="12" height="1" fill="#9a00ff"/>
<rect x="208" y="415" width="1" height="47" fill="url(#dPR)"/>
<rect x="210" y="413" width="2" height="51" fill="url(#dPW)"/>
<rect x="192" y="413" width="20" height="2" fill="url(#dPW)"/>
<rect x="192" y="462" width="20" height="2" fill="url(#dPW)"/>
<rect x="212" y="420" width="5" height="35" fill="#00ffff"/>
<rect x="212" y="413" width="1" height="7" fill="#00ff00"/>
<rect x="212" y="455" width="1" height="9" fill="#00ff00"/>
<rect x="752" y="290" width="12" height="51" fill="#ffe2c2"/>
<rect x="752" y="290" width="12" height="2" fill="url(#dBW)"/>
<rect x="752" y="339" width="12" height="2" fill="url(#dBW)"/>
<rect x="763" y="290" width="1" height="51" fill="#9a00ff"/>
<rect x="760" y="293" width="3" height="44" fill="#c8c8d8"/>
<rect x="756" y="293" width="3" height="44" fill="#c8c8d8"/>
<rect x="756" y="315" width="7" height="1" fill="#ffe2c2"/>
<rect x="755" y="293" width="1" height="44" fill="#9a00ff"/>
<rect x="755" y="336" width="8" height="1" fill="#9a00ff"/>
<rect x="752" y="290" width="2" height="51" fill="url(#dPW)"/>
<rect x="732" y="290" width="20" height="51" fill="#ffe2c2"/>
<rect x="750" y="290" width="2" height="51" fill="url(#dPW)"/>
<rect x="749" y="292" width="1" height="47" fill="url(#dPR)"/>
<rect x="738" y="293" width="11" height="44" fill="#d8e2fa"/>
<rect x="740" y="296" width="6" height="38" fill="#ffe2c2"/>
<rect x="744" y="297" width="1" height="36" fill="#c8c8d8"/>
<rect x="742" y="297" width="1" height="36" fill="#c8c8d8"/>
<rect x="740" y="315" width="6" height="1" fill="#ffe2c2"/>
<rect x="737" y="293" width="1" height="44" fill="#9a00ff"/>
<rect x="737" y="336" width="12" height="1" fill="#9a00ff"/>
<rect x="735" y="292" width="1" height="47" fill="url(#dPR)"/>
<rect x="732" y="290" width="2" height="51" fill="url(#dPW)"/>
<rect x="732" y="290" width="20" height="2" fill="url(#dPW)"/>
<rect x="732" y="339" width="20" height="2" fill="url(#dPW)"/>
<rect x="731" y="290" width="1" height="51" fill="url(#dPW)"/>
<rect x="726" y="297" width="5" height="35" fill="#00ffff"/>
<rect x="730" y="290" width="1" height="7" fill="#00ff00"/>
<rect x="730" y="332" width="1" height="9" fill="#00ff00"/>
<rect x="752" y="351" width="12" height="51" fill="#ffe2c2"/>
<rect x="752" y="351" width="12" height="2" fill="url(#dBW)"/>
<rect x="752" y="400" width="12" height="2" fill="url(#dBW)"/>
<rect x="763" y="351" width="1" height="51" fill="#9a00ff"/>
<rect x="760" y="354" width="3" height="44" fill="#c8c8d8"/>
<rect x="756" y="354" width="3" height="44" fill="#c8c8d8"/>
<rect x="756" y="376" width="7" height="1" fill="#ffe2c2"/>
<rect x="755" y="354" width="1" height="44" fill="#9a00ff"/>
<rect x="755" y="397" width="8" height="1" fill="#9a00ff"/>
<rect x="752" y="351" width="2" height="51" fill="url(#dPW)"/>
<rect x="732" y="351" width="20" height="51" fill="#ffe2c2"/>
<rect x="750" y="351" width="2" height="51" fill="url(#dPW)"/>
<rect x="749" y="353" width="1" height="47" fill="url(#dPR)"/>
<rect x="738" y="354" width="11" height="44" fill="#d8e2fa"/>
<rect x="740" y="357" width="6" height="38" fill="#ffe2c2"/>
<rect x="744" y="358" width="1" height="36" fill="#c8c8d8"/>
<rect x="742" y="358" width="1" height="36" fill="#c8c8d8"/>
<rect x="740" y="376" width="6" height="1" fill="#ffe2c2"/>
<rect x="737" y="354" width="1" height="44" fill="#9a00ff"/>
<rect x="737" y="397" width="12" height="1" fill="#9a00ff"/>
<rect x="735" y="353" width="1" height="47" fill="url(#dPR)"/>
<rect x="732" y="351" width="2" height="51" fill="url(#dPW)"/>
<rect x="732" y="351" width="20" height="2" fill="url(#dPW)"/>
<rect x="732" y="400" width="20" height="2" fill="url(#dPW)"/>
<rect x="731" y="351" width="1" height="51" fill="url(#dPW)"/>
<rect x="726" y="358" width="5" height="35" fill="#00ffff"/>
<rect x="730" y="351" width="1" height="7" fill="#00ff00"/>
<rect x="730" y="393" width="1" height="9" fill="#00ff00"/>
<rect x="361" y="411" width="36" height="85" fill="url(#hc)"/>
<rect x="360" y="411" width="185" height="34" fill="url(#hb)"/>
<rect x="361" y="411" width="36" height="34" fill="url(#hc)"/>
<rect x="405" y="408" width="176" height="34" fill="url(#hc)"/>
<rect x="545" y="441" width="36" height="55" fill="url(#hc)"/>
<rect x="360" y="411" width="185" height="1" fill="#0000ff"/>
<rect x="360" y="444" width="185" height="1" fill="#0000ff"/>
<rect x="360" y="411" width="1" height="34" fill="#0000ff"/>
<rect x="544" y="411" width="1" height="34" fill="#0000ff"/>
<rect x="361" y="411" width="36" height="1" fill="#00ffff"/>
<rect x="361" y="495" width="36" height="1" fill="#00ffff"/>
<rect x="361" y="411" width="1" height="85" fill="#00ffff"/>
<rect x="396" y="411" width="1" height="85" fill="#00ffff"/>
<rect x="405" y="408" width="176" height="1" fill="#00ffff"/>
<rect x="405" y="441" width="176" height="1" fill="#00ffff"/>
<rect x="405" y="408" width="1" height="34" fill="#00ffff"/>
<rect x="580" y="408" width="1" height="34" fill="#00ffff"/>
<rect x="545" y="441" width="36" height="1" fill="#00ffff"/>
<rect x="545" y="495" width="36" height="1" fill="#00ffff"/>
<rect x="545" y="441" width="1" height="55" fill="#00ffff"/>
<rect x="580" y="441" width="1" height="55" fill="#00ffff"/>
<rect x="360" y="324" width="134" height="3" fill="#0000ff"/>
<rect x="360" y="324" width="3" height="87" fill="#0000ff"/>
<rect x="217" y="319" width="25" height="1" fill="#00ffff"/>
<rect x="241" y="319" width="1" height="80" fill="#00ffff"/>
<rect x="217" y="373" width="14" height="1" fill="#00ffff"/>
<rect x="230" y="373" width="1" height="66" fill="#00ffff"/>
<rect x="217" y="438" width="14" height="1" fill="#00ffff"/>
<rect x="230" y="398" width="27" height="2" fill="#00ffff"/>
<rect x="256" y="293" width="2" height="104" fill="#ffff00"/>
<rect x="256" y="296" width="1" height="4" fill="#00ffff"/>
<rect x="257" y="296" width="1" height="4" fill="#000"/>
<rect x="256" y="304" width="1" height="4" fill="#00ffff"/>
<rect x="257" y="304" width="1" height="4" fill="#000"/>
<rect x="256" y="401" width="1" height="57" fill="#00ffff"/>
<rect x="316" y="293" width="1" height="165" fill="#00ffff"/>
<rect x="378" y="293" width="1" height="9" fill="#00ffff"/>
<rect x="346" y="301" width="33" height="1" fill="#00ffff"/>
<rect x="346" y="301" width="1" height="97" fill="#00ffff"/>
<rect x="623" y="256" width="3" height="54" fill="#00ffff"/>
<rect x="587" y="307" width="39" height="3" fill="#00ffff"/>
<rect x="591" y="316" width="135" height="2" fill="#00ffff"/>
<rect x="560" y="337" width="155" height="1" fill="#00ffff"/>
<rect x="714" y="337" width="1" height="40" fill="#00ffff"/>
<rect x="714" y="376" width="12" height="1" fill="#00ffff"/>
<rect x="592" y="342" width="95" height="2" fill="#00ffff"/>
<rect x="686" y="342" width="1" height="96" fill="#00ffff"/>
<rect x="686" y="437" width="78" height="1" fill="#00ffff"/>
<rect x="655" y="342" width="1" height="108" fill="#00ffff"/>
<rect x="655" y="449" width="30" height="1" fill="#00ffff"/>
<rect x="684" y="449" width="1" height="9" fill="#00ffff"/>
<rect x="570" y="362" width="22" height="2" fill="#0000ff"/>
<rect x="592" y="362" width="33" height="1" fill="#00ffff"/>
<rect x="624" y="362" width="1" height="96" fill="#00ffff"/>
<rect x="591" y="310" width="1" height="20" fill="#00ffff"/>
<rect x="492" y="311" width="97" height="1" fill="#00ffff"/>
<rect x="492" y="318" width="97" height="1" fill="#00ffff"/>
<rect x="492" y="311" width="1" height="8" fill="#00ffff"/>
<rect x="588" y="311" width="1" height="8" fill="#00ffff"/>
<rect x="494" y="307" width="93" height="3" fill="#d8e2fa"/>
<rect x="494" y="310" width="93" height="1" fill="#0000ff"/>
<rect x="494" y="311" width="93" height="5" fill="#ffe2c2"/>
<rect x="495" y="312" width="91" height="2" fill="#c8c8d8"/>
<rect x="495" y="314" width="91" height="1" fill="#0000ff"/>
<rect x="537" y="316" width="52" height="2" fill="#0000ff"/>
<rect x="524" y="319" width="33" height="4" fill="#d8e2fa"/>
<rect x="522" y="318" width="1" height="12" fill="#00ffff"/>
<rect x="560" y="318" width="1" height="15" fill="#00ffff"/>
<rect x="562" y="318" width="1" height="15" fill="#00ffff"/>
<rect x="494" y="323" width="93" height="5" fill="#ffe2c2"/>
<rect x="495" y="324" width="91" height="1" fill="#c8c8d8"/>
<rect x="495" y="325" width="91" height="1" fill="#0000ff"/>
<rect x="408" y="330" width="138" height="1" fill="#0000ff"/>
<rect x="546" y="329" width="42" height="1" fill="#00ff00"/>
<rect x="546" y="329" width="1" height="8" fill="#00ff00"/>
<rect x="547" y="330" width="41" height="6" fill="#ffe2c2"/>
<rect x="549" y="334" width="38" height="1" fill="url(#dash)"/>
<rect x="555" y="330" width="1" height="5" fill="#0000ff"/>
<rect x="556" y="330" width="1" height="5" fill="#00ffff"/>
<rect x="561" y="330" width="1" height="5" fill="#00ffff"/>
<rect x="567" y="330" width="1" height="3" fill="#0000ff"/>
<rect x="547" y="336" width="1" height="5" fill="#00ffff"/>
<rect x="550" y="338" width="19" height="1" fill="#00ffff"/>
<rect x="570" y="339" width="21" height="1" fill="#00ffff"/>
<rect x="556" y="336" width="1" height="3" fill="#00ff00"/>
<rect x="546" y="340" width="42" height="2" fill="#ffe2c2"/>
<rect x="544" y="329" width="1" height="15" fill="#0000ff"/>
<rect x="589" y="323" width="1" height="18" fill="#0000ff"/>
<rect x="585" y="330" width="7" height="1" fill="#00ffff"/>
<rect x="545" y="342" width="47" height="1" fill="#00ffff"/>
<rect x="545" y="343" width="47" height="1" fill="#0000ff"/>
<rect x="557" y="344" width="13" height="18" fill="#ffb9f2"/>
<rect x="557" y="354" width="13" height="1" fill="#000"/>
<rect x="557" y="356" width="13" height="1" fill="#000"/>
<rect x="373" y="340" width="13" height="22" fill="#ffb9f2"/>
<rect x="373" y="345" width="13" height="1" fill="#000"/>
<rect x="373" y="347" width="13" height="1" fill="#000"/>
<rect x="373" y="357" width="13" height="1" fill="#000"/>
<rect x="373" y="359" width="13" height="1" fill="#000"/>
<rect x="386" y="341" width="9" height="1" fill="#0000ff"/>
<rect x="386" y="361" width="8" height="1" fill="#0000ff"/>
<rect x="395" y="329" width="13" height="33" fill="#ffb9f2"/>
<rect x="395" y="331" width="13" height="1" fill="#000"/>
<rect x="395" y="333" width="13" height="1" fill="#000"/>
<rect x="395" y="344" width="13" height="1" fill="#000"/>
<rect x="395" y="346" width="13" height="1" fill="#000"/>
<rect x="395" y="357" width="13" height="1" fill="#000"/>
<rect x="395" y="359" width="13" height="1" fill="#000"/>
<rect x="408" y="331" width="1" height="31" fill="url(#dGr)"/>
<rect x="415" y="329" width="13" height="33" fill="#ffb9f2"/>
<rect x="415" y="331" width="13" height="1" fill="#000"/>
<rect x="415" y="333" width="13" height="1" fill="#000"/>
<rect x="415" y="344" width="13" height="1" fill="#000"/>
<rect x="415" y="346" width="13" height="1" fill="#000"/>
<rect x="415" y="357" width="13" height="1" fill="#000"/>
<rect x="415" y="359" width="13" height="1" fill="#000"/>
<rect x="428" y="331" width="1" height="31" fill="url(#dGr)"/>
<rect x="414" y="330" width="1" height="11" fill="#0000ff"/>
<rect x="414" y="341" width="1" height="21" fill="url(#dGr)"/>
<rect x="434" y="329" width="13" height="33" fill="#ffb9f2"/>
<rect x="434" y="331" width="13" height="1" fill="#000"/>
<rect x="434" y="333" width="13" height="1" fill="#000"/>
<rect x="434" y="344" width="13" height="1" fill="#000"/>
<rect x="434" y="346" width="13" height="1" fill="#000"/>
<rect x="434" y="357" width="13" height="1" fill="#000"/>
<rect x="434" y="359" width="13" height="1" fill="#000"/>
<rect x="447" y="331" width="1" height="31" fill="url(#dGr)"/>
<rect x="433" y="330" width="1" height="11" fill="#0000ff"/>
<rect x="433" y="341" width="1" height="21" fill="url(#dGr)"/>
<rect x="453" y="329" width="13" height="33" fill="#ffb9f2"/>
<rect x="453" y="331" width="13" height="1" fill="#000"/>
<rect x="453" y="333" width="13" height="1" fill="#000"/>
<rect x="453" y="344" width="13" height="1" fill="#000"/>
<rect x="453" y="346" width="13" height="1" fill="#000"/>
<rect x="453" y="357" width="13" height="1" fill="#000"/>
<rect x="453" y="359" width="13" height="1" fill="#000"/>
<rect x="466" y="331" width="1" height="31" fill="url(#dGr)"/>
<rect x="452" y="330" width="1" height="11" fill="#0000ff"/>
<rect x="452" y="341" width="1" height="21" fill="url(#dGr)"/>
<rect x="473" y="329" width="13" height="33" fill="#ffb9f2"/>
<rect x="473" y="331" width="13" height="1" fill="#000"/>
<rect x="473" y="333" width="13" height="1" fill="#000"/>
<rect x="473" y="344" width="13" height="1" fill="#000"/>
<rect x="473" y="346" width="13" height="1" fill="#000"/>
<rect x="473" y="357" width="13" height="1" fill="#000"/>
<rect x="473" y="359" width="13" height="1" fill="#000"/>
<rect x="486" y="331" width="1" height="31" fill="url(#dGr)"/>
<rect x="472" y="330" width="1" height="11" fill="#0000ff"/>
<rect x="472" y="341" width="1" height="21" fill="url(#dGr)"/>
<rect x="492" y="329" width="13" height="33" fill="#ffb9f2"/>
<rect x="492" y="331" width="13" height="1" fill="#000"/>
<rect x="492" y="333" width="13" height="1" fill="#000"/>
<rect x="492" y="344" width="13" height="1" fill="#000"/>
<rect x="492" y="346" width="13" height="1" fill="#000"/>
<rect x="492" y="357" width="13" height="1" fill="#000"/>
<rect x="492" y="359" width="13" height="1" fill="#000"/>
<rect x="505" y="331" width="1" height="31" fill="url(#dGr)"/>
<rect x="491" y="330" width="1" height="11" fill="#0000ff"/>
<rect x="491" y="341" width="1" height="21" fill="url(#dGr)"/>
<rect x="511" y="329" width="13" height="33" fill="#ffb9f2"/>
<rect x="511" y="331" width="13" height="1" fill="#000"/>
<rect x="511" y="333" width="13" height="1" fill="#000"/>
<rect x="511" y="344" width="13" height="1" fill="#000"/>
<rect x="511" y="346" width="13" height="1" fill="#000"/>
<rect x="511" y="357" width="13" height="1" fill="#000"/>
<rect x="511" y="359" width="13" height="1" fill="#000"/>
<rect x="524" y="331" width="1" height="31" fill="url(#dGr)"/>
<rect x="510" y="330" width="1" height="11" fill="#0000ff"/>
<rect x="510" y="341" width="1" height="21" fill="url(#dGr)"/>
<rect x="531" y="329" width="13" height="33" fill="#ffb9f2"/>
<rect x="531" y="331" width="13" height="1" fill="#000"/>
<rect x="531" y="333" width="13" height="1" fill="#000"/>
<rect x="531" y="344" width="13" height="1" fill="#000"/>
<rect x="531" y="346" width="13" height="1" fill="#000"/>
<rect x="531" y="357" width="13" height="1" fill="#000"/>
<rect x="531" y="359" width="13" height="1" fill="#000"/>
<rect x="544" y="331" width="1" height="31" fill="url(#dGr)"/>
<rect x="530" y="330" width="1" height="11" fill="#0000ff"/>
<rect x="530" y="341" width="1" height="21" fill="url(#dGr)"/>
<rect x="391" y="363" width="6" height="32" fill="#ffe2c2"/>
<rect x="392" y="364" width="2" height="30" fill="#c8c8d8"/>
<rect x="394" y="364" width="2" height="30" fill="#d8e2fa"/>
<rect x="394" y="365" width="1" height="28" fill="#0000ff"/>
<rect x="392" y="392" width="3" height="1" fill="#0000ff"/>
<rect x="396" y="370" width="4" height="18" fill="#d8e2fa"/>
<rect x="399" y="370" width="1" height="18" fill="#0000ff"/>
<rect x="400" y="363" width="10" height="32" fill="#ffe2c2"/>
<rect x="401" y="364" width="3" height="30" fill="#c8c8d8"/>
<rect x="405" y="364" width="4" height="30" fill="#d8e2fa"/>
<rect x="404" y="365" width="1" height="28" fill="#0000ff"/>
<rect x="401" y="392" width="4" height="1" fill="#0000ff"/>
<rect x="391" y="393" width="3" height="18" fill="#0000ff"/>
<rect x="405" y="393" width="4" height="10" fill="#0000ff"/>
<rect x="405" y="402" width="4" height="7" fill="#00ffff"/>
<rect x="410" y="363" width="6" height="32" fill="#ffe2c2"/>
<rect x="411" y="364" width="2" height="30" fill="#c8c8d8"/>
<rect x="413" y="364" width="2" height="30" fill="#d8e2fa"/>
<rect x="413" y="365" width="1" height="28" fill="#0000ff"/>
<rect x="411" y="392" width="3" height="1" fill="#0000ff"/>
<rect x="410" y="363" width="1" height="32" fill="#3a8a5a"/>
<rect x="415" y="370" width="4" height="18" fill="#d8e2fa"/>
<rect x="418" y="370" width="1" height="18" fill="#0000ff"/>
<rect x="419" y="363" width="10" height="32" fill="#ffe2c2"/>
<rect x="420" y="364" width="3" height="30" fill="#c8c8d8"/>
<rect x="424" y="364" width="4" height="30" fill="#d8e2fa"/>
<rect x="423" y="365" width="1" height="28" fill="#0000ff"/>
<rect x="420" y="392" width="4" height="1" fill="#0000ff"/>
<rect x="410" y="393" width="3" height="18" fill="#0000ff"/>
<rect x="424" y="393" width="4" height="10" fill="#0000ff"/>
<rect x="424" y="402" width="4" height="7" fill="#00ffff"/>
<rect x="429" y="363" width="6" height="32" fill="#ffe2c2"/>
<rect x="430" y="364" width="2" height="30" fill="#c8c8d8"/>
<rect x="432" y="364" width="2" height="30" fill="#d8e2fa"/>
<rect x="432" y="365" width="1" height="28" fill="#0000ff"/>
<rect x="430" y="392" width="3" height="1" fill="#0000ff"/>
<rect x="434" y="370" width="4" height="18" fill="#d8e2fa"/>
<rect x="437" y="370" width="1" height="18" fill="#0000ff"/>
<rect x="438" y="363" width="10" height="32" fill="#ffe2c2"/>
<rect x="439" y="364" width="3" height="30" fill="#c8c8d8"/>
<rect x="443" y="364" width="4" height="30" fill="#d8e2fa"/>
<rect x="442" y="365" width="1" height="28" fill="#0000ff"/>
<rect x="439" y="392" width="4" height="1" fill="#0000ff"/>
<rect x="438" y="363" width="1" height="32" fill="#00ff00"/>
<rect x="429" y="393" width="3" height="18" fill="#0000ff"/>
<rect x="443" y="393" width="4" height="10" fill="#0000ff"/>
<rect x="443" y="402" width="4" height="7" fill="#00ffff"/>
<rect x="448" y="363" width="6" height="32" fill="#ffe2c2"/>
<rect x="449" y="364" width="2" height="30" fill="#c8c8d8"/>
<rect x="451" y="364" width="2" height="30" fill="#d8e2fa"/>
<rect x="451" y="365" width="1" height="28" fill="#0000ff"/>
<rect x="449" y="392" width="3" height="1" fill="#0000ff"/>
<rect x="448" y="363" width="1" height="32" fill="#3a8a5a"/>
<rect x="453" y="370" width="4" height="18" fill="#d8e2fa"/>
<rect x="456" y="370" width="1" height="18" fill="#0000ff"/>
<rect x="457" y="363" width="10" height="32" fill="#ffe2c2"/>
<rect x="458" y="364" width="3" height="30" fill="#c8c8d8"/>
<rect x="462" y="364" width="4" height="30" fill="#d8e2fa"/>
<rect x="461" y="365" width="1" height="28" fill="#0000ff"/>
<rect x="458" y="392" width="4" height="1" fill="#0000ff"/>
<rect x="448" y="393" width="3" height="18" fill="#0000ff"/>
<rect x="462" y="393" width="4" height="10" fill="#0000ff"/>
<rect x="462" y="402" width="4" height="7" fill="#00ffff"/>
<rect x="467" y="363" width="6" height="32" fill="#ffe2c2"/>
<rect x="468" y="364" width="2" height="30" fill="#c8c8d8"/>
<rect x="470" y="364" width="2" height="30" fill="#d8e2fa"/>
<rect x="470" y="365" width="1" height="28" fill="#0000ff"/>
<rect x="468" y="392" width="3" height="1" fill="#0000ff"/>
<rect x="472" y="370" width="4" height="18" fill="#d8e2fa"/>
<rect x="475" y="370" width="1" height="18" fill="#0000ff"/>
<rect x="476" y="363" width="10" height="32" fill="#ffe2c2"/>
<rect x="477" y="364" width="3" height="30" fill="#c8c8d8"/>
<rect x="481" y="364" width="4" height="30" fill="#d8e2fa"/>
<rect x="480" y="365" width="1" height="28" fill="#0000ff"/>
<rect x="477" y="392" width="4" height="1" fill="#0000ff"/>
<rect x="476" y="363" width="1" height="32" fill="#00ff00"/>
<rect x="467" y="393" width="3" height="18" fill="#0000ff"/>
<rect x="481" y="393" width="4" height="10" fill="#0000ff"/>
<rect x="481" y="402" width="4" height="7" fill="#00ffff"/>
<rect x="487" y="363" width="6" height="32" fill="#ffe2c2"/>
<rect x="488" y="364" width="2" height="30" fill="#c8c8d8"/>
<rect x="490" y="364" width="2" height="30" fill="#d8e2fa"/>
<rect x="490" y="365" width="1" height="28" fill="#0000ff"/>
<rect x="488" y="392" width="3" height="1" fill="#0000ff"/>
<rect x="487" y="363" width="1" height="32" fill="#3a8a5a"/>
<rect x="492" y="370" width="4" height="18" fill="#d8e2fa"/>
<rect x="495" y="370" width="1" height="18" fill="#0000ff"/>
<rect x="496" y="363" width="10" height="32" fill="#ffe2c2"/>
<rect x="497" y="364" width="3" height="30" fill="#c8c8d8"/>
<rect x="501" y="364" width="4" height="30" fill="#d8e2fa"/>
<rect x="500" y="365" width="1" height="28" fill="#0000ff"/>
<rect x="497" y="392" width="4" height="1" fill="#0000ff"/>
<rect x="487" y="393" width="3" height="18" fill="#0000ff"/>
<rect x="501" y="393" width="4" height="10" fill="#0000ff"/>
<rect x="501" y="402" width="4" height="7" fill="#00ffff"/>
<rect x="506" y="363" width="6" height="32" fill="#ffe2c2"/>
<rect x="507" y="364" width="2" height="30" fill="#c8c8d8"/>
<rect x="509" y="364" width="2" height="30" fill="#d8e2fa"/>
<rect x="509" y="365" width="1" height="28" fill="#0000ff"/>
<rect x="507" y="392" width="3" height="1" fill="#0000ff"/>
<rect x="506" y="363" width="1" height="32" fill="#3a8a5a"/>
<rect x="511" y="370" width="4" height="18" fill="#d8e2fa"/>
<rect x="514" y="370" width="1" height="18" fill="#0000ff"/>
<rect x="515" y="363" width="10" height="32" fill="#ffe2c2"/>
<rect x="516" y="364" width="3" height="30" fill="#c8c8d8"/>
<rect x="520" y="364" width="4" height="30" fill="#d8e2fa"/>
<rect x="519" y="365" width="1" height="28" fill="#0000ff"/>
<rect x="516" y="392" width="4" height="1" fill="#0000ff"/>
<rect x="515" y="363" width="1" height="32" fill="#00ff00"/>
<rect x="506" y="393" width="3" height="18" fill="#0000ff"/>
<rect x="520" y="393" width="4" height="10" fill="#0000ff"/>
<rect x="520" y="402" width="4" height="7" fill="#00ffff"/>
<rect x="525" y="363" width="6" height="32" fill="#ffe2c2"/>
<rect x="526" y="364" width="2" height="30" fill="#c8c8d8"/>
<rect x="528" y="364" width="2" height="30" fill="#d8e2fa"/>
<rect x="528" y="365" width="1" height="28" fill="#0000ff"/>
<rect x="526" y="392" width="3" height="1" fill="#0000ff"/>
<rect x="530" y="370" width="4" height="18" fill="#d8e2fa"/>
<rect x="533" y="370" width="1" height="18" fill="#0000ff"/>
<rect x="534" y="363" width="10" height="32" fill="#ffe2c2"/>
<rect x="535" y="364" width="3" height="30" fill="#c8c8d8"/>
<rect x="539" y="364" width="4" height="30" fill="#d8e2fa"/>
<rect x="538" y="365" width="1" height="28" fill="#0000ff"/>
<rect x="535" y="392" width="4" height="1" fill="#0000ff"/>
<rect x="525" y="393" width="3" height="18" fill="#0000ff"/>
<rect x="539" y="393" width="4" height="10" fill="#0000ff"/>
<rect x="539" y="402" width="4" height="7" fill="#00ffff"/>
<rect x="394" y="364" width="1" height="30" fill="#ff9a20"/>
<rect x="540" y="393" width="4" height="10" fill="#0000ff"/>
<rect x="540" y="402" width="4" height="7" fill="#00ffff"/>
<rect x="256" y="397" width="61" height="4" fill="#00ffff"/>
<rect x="317" y="396" width="84" height="6" fill="#00ffff"/>
<rect x="401" y="397" width="37" height="5" fill="#00ffff"/>
<rect x="438" y="398" width="20" height="4" fill="#00ffff"/>
<rect x="458" y="399" width="20" height="3" fill="#00ffff"/>
<rect x="478" y="400" width="19" height="2" fill="#00ffff"/>
<rect x="497" y="401" width="39" height="1" fill="#00ffff"/>
<rect x="477" y="395" width="1" height="6" fill="#00ffff"/>
<rect x="496" y="395" width="1" height="6" fill="#00ffff"/>
<rect x="515" y="395" width="1" height="7" fill="#00ffff"/>
<rect x="535" y="395" width="1" height="7" fill="#00ffff"/>
<rect x="361" y="465" width="36" height="30" fill="url(#hp)"/>
<rect x="361" y="464" width="36" height="1" fill="#9a00ff"/>
<rect x="361" y="479" width="36" height="2" fill="#9a00ff"/>
<rect x="361" y="495" width="36" height="1" fill="#9a00ff"/>
<rect x="545" y="465" width="36" height="30" fill="url(#hp)"/>
<rect x="545" y="464" width="36" height="1" fill="#9a00ff"/>
<rect x="545" y="479" width="36" height="2" fill="#9a00ff"/>
<rect x="545" y="495" width="36" height="1" fill="#9a00ff"/>
<rect x="402" y="480" width="1" height="16" fill="#9a00ff"/>
<text x="274" y="243" font-family="Liberation Sans" font-size="9.5" fill="#9a00ff" textLength="10" lengthAdjust="spacingAndGlyphs" shape-rendering="auto">P2</text>
<rect x="269" y="240" width="7" height="1" fill="#9a00ff"/>
<rect x="272" y="237" width="1" height="7" fill="#9a00ff"/>
<text x="337" y="243" font-family="Liberation Sans" font-size="9.5" fill="#9a00ff" textLength="9" lengthAdjust="spacingAndGlyphs" shape-rendering="auto">P1</text>
<rect x="332" y="240" width="7" height="1" fill="#9a00ff"/>
<rect x="335" y="237" width="1" height="7" fill="#9a00ff"/>
<text x="400" y="244" font-family="Liberation Sans" font-size="9.5" fill="#9a00ff" textLength="8" lengthAdjust="spacingAndGlyphs" shape-rendering="auto">P0</text>
<rect x="396" y="241" width="7" height="1" fill="#9a00ff"/>
<rect x="399" y="238" width="1" height="7" fill="#9a00ff"/>
<text x="638" y="238" font-family="Liberation Sans" font-size="9.5" fill="#9a00ff" textLength="15" lengthAdjust="spacingAndGlyphs" shape-rendering="auto">VDD</text>
<rect x="638" y="234" width="7" height="1" fill="#9a00ff"/>
<rect x="641" y="231" width="1" height="7" fill="#9a00ff"/>
<text x="133" y="296" font-family="Liberation Sans" font-size="9.5" fill="#9a00ff" textLength="11" lengthAdjust="spacingAndGlyphs" shape-rendering="auto">P5</text>
<rect x="133" y="293" width="7" height="1" fill="#9a00ff"/>
<rect x="136" y="290" width="1" height="7" fill="#9a00ff"/>
<text x="133" y="357" font-family="Liberation Sans" font-size="9.5" fill="#9a00ff" textLength="11" lengthAdjust="spacingAndGlyphs" shape-rendering="auto">P4</text>
<rect x="133" y="354" width="7" height="1" fill="#9a00ff"/>
<rect x="136" y="351" width="1" height="7" fill="#9a00ff"/>
<text x="133" y="418" font-family="Liberation Sans" font-size="9.5" fill="#9a00ff" textLength="11" lengthAdjust="spacingAndGlyphs" shape-rendering="auto">P6</text>
<rect x="133" y="415" width="7" height="1" fill="#9a00ff"/>
<rect x="136" y="412" width="1" height="7" fill="#9a00ff"/>
<text x="804" y="311" font-family="Liberation Sans" font-size="9.5" fill="#9a00ff" textLength="19" lengthAdjust="spacingAndGlyphs" shape-rendering="auto">Vdd!</text>
<text x="801" y="368" font-family="Liberation Sans" font-size="9.5" fill="#9a00ff" textLength="29" lengthAdjust="spacingAndGlyphs" shape-rendering="auto">R_Bias</text>
<text x="806" y="441" font-family="Liberation Sans" font-size="9.5" fill="#9a00ff" textLength="17" lengthAdjust="spacingAndGlyphs" shape-rendering="auto">Vref</text>
<text x="276" y="538" font-family="Liberation Sans" font-size="9.5" fill="#9a00ff" textLength="10" lengthAdjust="spacingAndGlyphs" shape-rendering="auto">P7</text>
<rect x="271" y="534" width="7" height="1" fill="#9a00ff"/>
<rect x="274" y="531" width="1" height="7" fill="#9a00ff"/>
<text x="339" y="540" font-family="Liberation Sans" font-size="9.5" fill="#9a00ff" textLength="9" lengthAdjust="spacingAndGlyphs" shape-rendering="auto">P8</text>
<text x="376" y="497" font-family="Liberation Sans" font-size="9.5" fill="#9a00ff" textLength="20" lengthAdjust="spacingAndGlyphs" shape-rendering="auto">GND</text>
<rect x="385" y="494" width="7" height="1" fill="#9a00ff"/>
<rect x="388" y="491" width="1" height="7" fill="#9a00ff"/>
<text x="558" y="501" font-family="Liberation Sans" font-size="9.5" fill="#9a00ff" textLength="17" lengthAdjust="spacingAndGlyphs" shape-rendering="auto">Vss</text>
<text x="605" y="515" font-family="Liberation Sans" font-size="10" fill="#9a00ff" textLength="54" lengthAdjust="spacingAndGlyphs" shape-rendering="auto">R_Feedback</text>
<text x="701" y="511" font-family="Liberation Sans" font-size="9.5" fill="#9a00ff" textLength="12" lengthAdjust="spacingAndGlyphs" shape-rendering="auto">Vin</text>
</g></svg>
<svg class="a" style="left:0;top:0;will-change:transform;" width="910" height="719" viewBox="0 0 910 719">
<rect x="5" y="74" width="41" height="1" fill="#f2f2f6"/>
<rect x="5" y="113" width="40" height="1" fill="#9c9fae"/>
<rect x="5" y="114" width="41" height="1" fill="#f2f2f6"/>
<rect x="5" y="153" width="40" height="1" fill="#9c9fae"/>
<rect x="5" y="154" width="41" height="1" fill="#f2f2f6"/>
<rect x="5" y="193" width="40" height="1" fill="#9c9fae"/>
<rect x="5" y="194" width="41" height="1" fill="#f2f2f6"/>
<rect x="5" y="233" width="40" height="1" fill="#9c9fae"/>
<rect x="5" y="234" width="41" height="1" fill="#f2f2f6"/>
<rect x="5" y="273" width="40" height="1" fill="#9c9fae"/>
<rect x="5" y="274" width="41" height="1" fill="#f2f2f6"/>
<rect x="5" y="313" width="40" height="1" fill="#9c9fae"/>
<rect x="5" y="314" width="41" height="1" fill="#f2f2f6"/>
<rect x="5" y="353" width="40" height="1" fill="#9c9fae"/>
<rect x="5" y="354" width="41" height="1" fill="#f2f2f6"/>
<rect x="5" y="393" width="40" height="1" fill="#9c9fae"/>
<rect x="5" y="394" width="41" height="1" fill="#f2f2f6"/>
<rect x="5" y="433" width="40" height="1" fill="#9c9fae"/>
<rect x="5" y="434" width="41" height="1" fill="#f2f2f6"/>
<rect x="5" y="473" width="40" height="1" fill="#9c9fae"/>
<rect x="5" y="474" width="41" height="1" fill="#f2f2f6"/>
<rect x="5" y="513" width="40" height="1" fill="#9c9fae"/>
<rect x="5" y="514" width="41" height="1" fill="#f2f2f6"/>
<rect x="5" y="553" width="40" height="1" fill="#9c9fae"/>
<rect x="5" y="554" width="41" height="1" fill="#f2f2f6"/>
<rect x="5" y="593" width="40" height="1" fill="#9c9fae"/>
<rect x="5" y="594" width="41" height="1" fill="#f2f2f6"/>
<rect x="5" y="633" width="40" height="1" fill="#9c9fae"/>
<rect x="5" y="634" width="41" height="1" fill="#f2f2f6"/>
<rect x="5" y="673" width="40" height="1" fill="#9c9fae"/>
<rect x="5" y="674" width="41" height="1" fill="#f2f2f6"/>
<rect x="5" y="713" width="40" height="1" fill="#9c9fae"/>
<g transform="translate(5,74)">
<path d="M19.5,34.5 L30,27 L30,21.5 L31.5,23 L31.5,28.5 L20.5,35.5 Z" fill="#8e909c" opacity="0.8"/>
<g stroke="#000" stroke-width="0.9" stroke-linejoin="miter">
<path d="M9,14.5 L15,8.9 L18.5,12.5 L12.5,18 Z" fill="#fff"/>
<path d="M20,11.5 L23.4,8.1 L28.9,13.4 L25.5,17 Z" fill="#fff"/>
<path d="M11,23.5 L18.4,27.5 L18.4,33.4 L11,29 Z" fill="#fff"/>
<path d="M18.4,27.5 L26,23.5 L26,29 L18.4,33.4 Z" fill="#d4d6de"/>
<path d="M8.1,21.1 L13.5,16.5 L18.4,20.5 L13,25 Z" fill="#fff"/>
<path d="M18.4,20.5 L24,16 L28.9,20.6 L23.5,25 Z" fill="#fff"/>
</g>
<path d="M13.5,16.5 L18.4,20.5 L24,16 L18.4,14 Z" fill="#9ea0ae"/>
<rect x="17.6" y="5.6" width="2.4" height="11" fill="#000"/>
<path d="M14,13.3 L18.9,18.5 L23.8,13.3" fill="none" stroke="#000" stroke-width="2.6"/>
</g>
<g transform="translate(5,114)">
<rect x="6.8" y="5.8" width="18" height="27.5" fill="none" stroke="#000" stroke-width="1.5"/>
<rect x="8" y="7" width="16" height="25.5" fill="#c6c8d4" opacity="0.5"/>
<circle cx="18.4" cy="18.6" r="9.3" fill="#b0b3c6" stroke="#000" stroke-width="1.6"/>
<circle cx="18.4" cy="18.6" r="10.6" fill="none" stroke="#fff" stroke-width="0.9" stroke-dasharray="1.5 1"/>
<rect x="12" y="14.6" width="9.7" height="1.6" fill="#fff"/>
<rect x="10" y="17.4" width="12.3" height="1.3" fill="#000"/>
<rect x="20" y="18.6" width="1.2" height="8.5" fill="#000"/>
<rect x="17.2" y="21" width="1.2" height="6" fill="#fff"/>
<rect x="20.6" y="24" width="4.4" height="1.1" fill="#000"/>
<path d="M25.5,25.5 L33.2,32.8" stroke="#000" stroke-width="2.4"/>
<path d="M26.2,24.3 L33.9,31.6" stroke="#fff" stroke-width="1"/>
</g>
<g transform="translate(5,154)">
<circle cx="15" cy="16" r="7.2" fill="none" stroke="#000" stroke-width="1.6"/>
<circle cx="15" cy="16" r="8.4" fill="none" stroke="#fff" stroke-width="0.8" stroke-dasharray="1.5 1"/>
<rect x="11" y="14.8" width="8" height="2.4" fill="#000"/>
<rect x="13.8" y="12" width="2.4" height="8" fill="#000"/>
<path d="M20,21.5 L31,32" stroke="#000" stroke-width="2.2"/>
<path d="M20.8,20.5 L31.8,31" stroke="#fff" stroke-width="1"/>
</g>
<g transform="translate(5,194)">
<circle cx="15" cy="16" r="7.2" fill="none" stroke="#000" stroke-width="1.6"/>
<circle cx="15" cy="16" r="8.4" fill="none" stroke="#fff" stroke-width="0.8" stroke-dasharray="1.5 1"/>
<rect x="11" y="14.8" width="8" height="2.4" fill="#000"/>
<path d="M20,21.5 L31,32" stroke="#000" stroke-width="2.2"/>
<path d="M20.8,20.5 L31.8,31" stroke="#fff" stroke-width="1"/>
</g>
<g transform="translate(5,234)">
<rect x="7" y="6.5" width="10" height="16.5" fill="none" stroke="#fff" stroke-width="1" transform="translate(1,1)"/>
<rect x="7" y="6.5" width="10" height="16.5" fill="none" stroke="#000" stroke-width="1.6"/>
<rect x="6.5" y="6.5" width="20" height="20" fill="none" stroke="#000" stroke-width="1" stroke-dasharray="1 1" shape-rendering="crispEdges"/>
<path d="M27.20,27.00 L27.20,34.50 L29.20,32.80 L30.80,35.60 L32.00,35.00 L30.60,32.20 L33.20,32.20 Z" fill="#000"/></g>
<g transform="translate(5,274)"><rect x="3.5" y="10" width="15" height="1" fill="#fff"/><rect x="3.5" y="11" width="15" height="1" fill="#000" opacity="0.25"/><rect x="3.5" y="12" width="15" height="1" fill="#fff"/><rect x="3.5" y="13" width="15" height="1" fill="#000" opacity="0.25"/><rect x="3.5" y="14" width="15" height="1" fill="#fff"/><rect x="3.5" y="15" width="15" height="1" fill="#000" opacity="0.25"/><rect x="3.5" y="16" width="15" height="1" fill="#fff"/><rect x="3.5" y="17" width="15" height="1" fill="#000" opacity="0.25"/><rect x="3.5" y="18" width="15" height="1" fill="#fff"/><rect x="3.5" y="19" width="15" height="1" fill="#000" opacity="0.25"/><rect x="3.5" y="20" width="15" height="1" fill="#fff"/><rect x="3.5" y="21" width="15" height="1" fill="#000" opacity="0.25"/><rect x="3.5" y="22" width="15" height="1" fill="#fff"/><rect x="3.5" y="23" width="15" height="1" fill="#000" opacity="0.25"/><rect x="3.5" y="24" width="15" height="1" fill="#fff"/><rect x="3.5" y="25" width="15" height="1" fill="#000" opacity="0.25"/>
<rect x="5" y="10" width="1" height="16" fill="#000" opacity="0.5"/>
<rect x="15" y="10" width="1.5" height="16" fill="#000" opacity="0.6"/>
<rect x="18.5" y="10.5" width="9.5" height="15.5" fill="#b0b3c6" stroke="#000" stroke-width="1.6"/>
<path d="M28.50,26.50 L28.50,34.00 L30.50,32.30 L32.10,35.10 L33.30,34.50 L31.90,31.70 L34.50,31.70 Z" fill="#000"/></g>
<g transform="translate(5,314)"><rect x="3.5" y="9" width="19" height="1" fill="#fff"/><rect x="3.5" y="11" width="19" height="1" fill="#fff"/><rect x="3.5" y="13" width="19" height="1" fill="#fff"/><rect x="3.5" y="15" width="19" height="1" fill="#fff"/><rect x="3.5" y="17" width="19" height="1" fill="#fff"/><rect x="3.5" y="19" width="19" height="1" fill="#fff"/><rect x="3.5" y="21" width="19" height="1" fill="#fff"/><rect x="3.5" y="23" width="19" height="1" fill="#fff"/><rect x="3.5" y="25" width="19" height="1" fill="#fff"/>
<rect x="16.5" y="10.5" width="9.5" height="16" fill="#b0b3c6" stroke="#000" stroke-width="1.6"/>
<path d="M27.00,27.00 L27.00,34.50 L29.00,32.80 L30.60,35.60 L31.80,35.00 L30.40,32.20 L33.00,32.20 Z" fill="#000"/></g>
<g transform="translate(5,354)">
<path d="M9,26 L28.5,7 L32.5,11 L13,30 Z" fill="#fff" stroke="#000" stroke-width="0.8"/>
<path d="M13,30 L32.5,11" stroke="#000" stroke-width="1.8"/>
<path d="M9,26 L13,30 L7,32.5 Z" fill="#d8d8e0" stroke="#000" stroke-width="0.8"/>
<path d="M15.5,19.8 L19.5,23.8 M17.5,17.8 L21.5,21.8 M19.5,15.8 L23.5,19.8" stroke="#000" stroke-width="1"/>
<path d="M28.5,7 L29.5,5.5 M32.5,11 L34,10" stroke="#000" stroke-width="0.8"/>
</g>
<g transform="translate(5,394)">
<path d="M7.5,20 C7.5,4 29.5,4 29.5,20 L29.5,25" fill="none" stroke="#000" stroke-width="1.6"/>
<path d="M4.5,18 L10.5,18 L7.5,23.5 Z" fill="#000"/>
<rect x="26.8" y="25" width="5.2" height="5" fill="#000"/>
<rect x="5" y="25" width="1.1" height="1.1" fill="#000"/><rect x="5" y="27" width="1.1" height="1.1" fill="#000"/><rect x="5" y="29" width="1.1" height="1.1" fill="#000"/><rect x="7" y="25" width="1.1" height="1.1" fill="#000"/><rect x="7" y="29" width="1.1" height="1.1" fill="#000"/><rect x="9" y="25" width="1.1" height="1.1" fill="#000"/><rect x="9" y="27" width="1.1" height="1.1" fill="#000"/><rect x="9" y="29" width="1.1" height="1.1" fill="#000"/>
</g>
<g transform="translate(5,434)"><rect x="6.8" y="7" width="2.2" height="27" fill="#000"/><rect x="9.0" y="7" width="1.3" height="27" fill="#fff"/><rect x="10.4" y="8" width="1" height="25" fill="#fff" opacity="0.5" stroke-dasharray="1 1"/><rect x="4.8" y="15.5" width="6" height="2.8" fill="#fff" stroke="#000" stroke-width="0.6"/><rect x="14" y="7" width="2.2" height="27" fill="#000"/><rect x="16.2" y="7" width="1.3" height="27" fill="#fff"/><rect x="17.6" y="8" width="1" height="25" fill="#fff" opacity="0.5" stroke-dasharray="1 1"/><rect x="12" y="22.8" width="6" height="2.8" fill="#fff" stroke="#000" stroke-width="0.6"/><rect x="21.2" y="7" width="2.2" height="27" fill="#000"/><rect x="23.4" y="7" width="1.3" height="27" fill="#fff"/><rect x="24.8" y="8" width="1" height="25" fill="#fff" opacity="0.5" stroke-dasharray="1 1"/><rect x="19.2" y="13.3" width="6" height="2.8" fill="#fff" stroke="#000" stroke-width="0.6"/><rect x="28.4" y="7" width="2.2" height="27" fill="#000"/><rect x="30.599999999999998" y="7" width="1.3" height="27" fill="#fff"/><rect x="32.0" y="8" width="1" height="25" fill="#fff" opacity="0.5" stroke-dasharray="1 1"/><rect x="26.4" y="23.3" width="6" height="2.8" fill="#fff" stroke="#000" stroke-width="0.6"/></g>
<g transform="translate(5,474)">
<path d="M11,12 L31.5,28.5" stroke="#fff" stroke-width="1.3"/>
<path d="M11.5,13.2 L32,29.6" stroke="#000" stroke-width="0.7"/>
<g transform="translate(14,9.5) rotate(-40)"><ellipse rx="4.2" ry="2.8" fill="#fff" stroke="#000" stroke-width="0.9"/><ellipse cx="0.6" cy="0.5" rx="1.6" ry="1.3" fill="#000"/></g>
<g transform="translate(21.2,16.6) rotate(-40)"><ellipse rx="4.2" ry="2.8" fill="#fff" stroke="#000" stroke-width="0.9"/><ellipse cx="0.6" cy="0.5" rx="1.6" ry="1.3" fill="#000"/></g>
<g transform="translate(28.4,23.8) rotate(-40)"><ellipse rx="4.2" ry="2.8" fill="#fff" stroke="#000" stroke-width="0.9"/><ellipse cx="0.6" cy="0.5" rx="1.6" ry="1.3" fill="#000"/></g>
<path d="M8,31 L14,35 L20,30 L14,26 Z" fill="#8e909c" opacity="0.6"/>
<g fill="#fff" stroke="#000" stroke-width="0.8">
<path d="M5.5,27 L10,23.5 L13,25.5 L16.5,22.5 L19.5,24.5 L16,27.5 L18.5,29.5 L14,33 L11,31 L8.5,33 L5.5,31 L8.5,28.5 Z"/>
</g>
<path d="M9,26.5 L13,29 M12,24.5 L15.5,27" stroke="#000" stroke-width="0.7"/>
</g>
<g transform="translate(5,514)">
<path d="M6,26.2 L15,26.2 L15,10 L18,10" fill="none" stroke="#000" stroke-width="2.4"/>
<path d="M19,10 L26,10" stroke="#000" stroke-width="2" stroke-dasharray="1.5 1.5"/>
<path d="M26.00,12.50 L26.00,20.00 L28.00,18.30 L29.60,21.10 L30.80,20.50 L29.40,17.70 L32.00,17.70 Z" fill="#000"/></g>
<g transform="translate(5,554)">
<path d="M23.8,15 L17.3,8.5 L8.5,8.5 L8.5,17.2 L14.5,17.2 L14.5,24.2 L23.8,24.2" fill="none" stroke="#000" stroke-width="1.6"/>
<path d="M23.8,15.5 L23.8,24" stroke="#000" stroke-width="1.2" stroke-dasharray="1 1"/>
<path d="M23.80,25.00 L23.80,32.50 L25.80,30.80 L27.40,33.60 L28.60,33.00 L27.20,30.20 L29.80,30.20 Z" fill="#000"/></g>
<g transform="translate(5,594)">
<path d="M7.5,12.3 L5.6,12.3 L5.6,25.7 L7.5,25.7 M28.7,12.3 L30.6,12.3 L30.6,25.7 L28.7,25.7" fill="none" stroke="#000" stroke-width="1.3"/><g font-family="Liberation Sans" font-size="13" fill="#000" stroke="#000" stroke-width="0.2"><text transform="translate(8.9,22.8) scale(0.56,1.05)">a</text><text transform="translate(14.3,22.8) scale(0.56,1.05)">b</text><text transform="translate(19.6,22.8) scale(0.56,1.05)">c</text><text transform="translate(24.4,22.8) scale(0.56,1.05)">d</text></g>
</g>
<g transform="translate(5,634)">
<rect x="13.8" y="10" width="10" height="15.5" fill="none" stroke="#000" stroke-width="1.6"/>
<path d="M24.00,25.50 L24.00,33.00 L26.00,31.30 L27.60,34.10 L28.80,33.50 L27.40,30.70 L30.00,30.70 Z" fill="#000"/></g>
<g transform="translate(5,674)">
<path d="M7,31 L10.5,35 L34,13 L32.5,11.5 Z" fill="#8e909c" opacity="0.6"/>
<path d="M4.5,28 L27,7 L32.5,11.5 L9.5,33 Z" fill="#ececf2" stroke="#000" stroke-width="0.9"/>
<path d="M9.5,33 L32.5,11.5" stroke="#000" stroke-width="1.4"/>
<path d="M6.20,27.30 l1.8,2.0" stroke="#000" stroke-width="1"/><path d="M7.65,25.95 l1.8,2.0" stroke="#000" stroke-width="1"/><path d="M9.10,24.60 l1.8,2.0" stroke="#000" stroke-width="1"/><path d="M10.55,23.25 l1.8,2.0" stroke="#000" stroke-width="1"/><path d="M12.00,21.90 l1.8,2.0" stroke="#000" stroke-width="1"/><path d="M13.45,20.55 l1.8,2.0" stroke="#000" stroke-width="1"/><path d="M14.90,19.20 l1.8,2.0" stroke="#000" stroke-width="1"/><path d="M16.35,17.85 l1.8,2.0" stroke="#000" stroke-width="1"/><path d="M17.80,16.50 l1.8,2.0" stroke="#000" stroke-width="1"/><path d="M19.25,15.15 l1.8,2.0" stroke="#000" stroke-width="1"/><path d="M20.70,13.80 l1.8,2.0" stroke="#000" stroke-width="1"/><path d="M22.15,12.45 l1.8,2.0" stroke="#000" stroke-width="1"/><path d="M23.60,11.10 l1.8,2.0" stroke="#000" stroke-width="1"/><path d="M25.05,9.75 l1.8,2.0" stroke="#000" stroke-width="1"/><path d="M26.50,8.40 l1.8,2.0" stroke="#000" stroke-width="1"/></g>
<rect x="45" y="74" width="1" height="640" fill="#8e909c"/>
<rect x="46" y="74" width="1" height="640" fill="#f2f2f6"/>
<rect x="122" y="74" width="1" height="603" fill="#fff"/>
<rect x="47" y="554" width="858" height="1" fill="#fff"/>
</svg>
<div class="t bm" style="left:49px;top:681px;">mouse L: mouseSingleSelectPt</div>
<div class="t bm" style="left:357.5px;top:681px;">M: mousePopUp()</div>
<div class="t bm" style="left:623px;top:681px;">R: geScroll(nil "e" nil)</div>
<div class="t bm" style="left:49px;top:700px;font-size:10.5px;">&gt;</div>
<style>.bm{font-family:"Liberation Mono",monospace;font-weight:bold;font-size:11.67px;color:#000;}</style>
<!-- bottom lines -->
<div class="a" style="left:47px;top:694px;width:858px;height:1px;background:#8e909c;"></div>
<div class="a" style="left:47px;top:695px;width:858px;height:1px;background:#f4f4f6;"></div>

</body></html>
